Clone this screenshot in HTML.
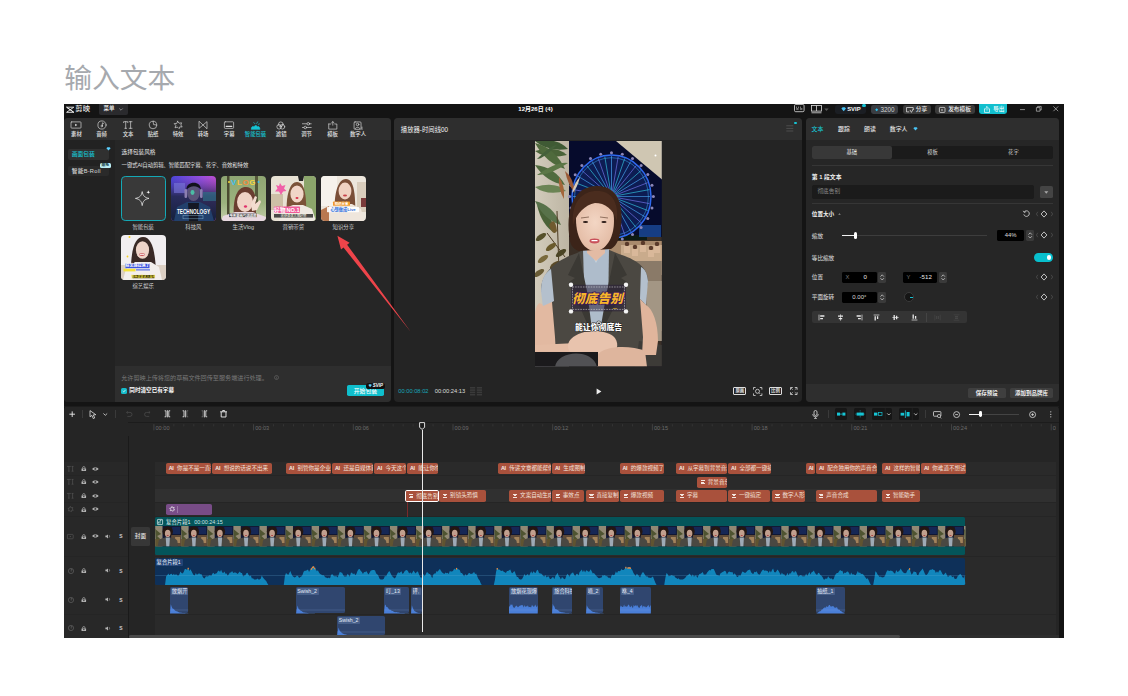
<!DOCTYPE html>
<html lang="zh-CN"><head><meta charset="utf-8"><title>输入文本</title>
<style>
html,body{margin:0;padding:0;background:#fff;}
body{width:1128px;height:696px;position:relative;overflow:hidden;font-family:"Liberation Sans","Noto Sans CJK SC",sans-serif;}
body div,body svg{position:absolute;box-sizing:border-box;}
svg{overflow:visible;}
.r2{border-radius:2px}
</style></head><body>
<div style="left:64.2px;top:58.6px;height:40px;line-height:40px;font-size:27.8px;font-weight:400;color:#a6a9ae;white-space:nowrap;font-family:'Liberation Sans','Noto Sans CJK SC',sans-serif;">输入文本</div>
<div style="left:64px;top:104px;width:1000px;height:534px;background:#141414;"></div>
<svg style="left:66px;top:105.5px;" width="8.5" height="7.5" viewBox="0 0 8.5 7.5"><path d="M0.6 1.2 L7.8 1.2 L0.6 6.3 L7.8 6.3 Z M0.6 1.2 L7.8 6.3" fill="none" stroke="#f0f0f0" stroke-width="0.9" stroke-linejoin="round"/></svg>
<div style="top:104.3px;height:10px;line-height:10px;font-size:7.3px;color:#e6e6e6;white-space:nowrap;left:75.3px;font-weight:500;letter-spacing:0.1px;">剪映</div>
<div style="left:98.5px;top:104px;width:29.5px;height:10.5px;background:#2a2a2d;border-radius:0 0 2px 2px;"></div>
<div style="top:104.3px;height:9.5px;line-height:9.5px;font-size:5.5px;color:#f0f0f0;white-space:nowrap;left:103.5px;font-weight:500;">菜单</div>
<svg style="left:118.5px;top:108px;" width="4" height="3" viewBox="0 0 4 3"><path d="M0.3 0.5 L2 2.2 L3.7 0.5" fill="none" stroke="#aaa" stroke-width="0.7"/></svg>
<div style="top:104px;height:10.5px;line-height:10.5px;font-size:6px;color:#fff;white-space:nowrap;left:435.5px;width:200px;text-align:center;font-weight:700;">12月26日 (4)</div>
<div style="left:64px;top:118px;width:327px;height:284px;background:#262626;border-radius:4px;overflow:hidden;"><div style="left:0;top:0;width:327px;height:22px;background:#2e2e2e"></div><div style="left:0;top:22px;width:50.5px;height:262px;background:#222"></div><div style="left:50.5px;top:248px;width:277px;height:36px;background:#2e2e2e"></div></div>
<div style="left:394px;top:118px;width:408px;height:284px;background:#242424;border-radius:4px;overflow:hidden;"><div style="left:0;top:0;width:408px;height:21.5px;background:#2e2e2e"></div></div>
<div style="left:806px;top:118px;width:253px;height:284px;background:#262626;border-radius:4px;overflow:hidden;"><div style="left:0;top:0;width:253px;height:21.5px;background:#2e2e2e"></div><div style="left:0;top:266px;width:253px;height:18px;background:#2e2e2e"></div></div>
<div style="left:64px;top:406px;width:995px;height:232px;background:#252525;border-radius:4px 4px 0 0;overflow:hidden;"></div>
<svg style="left:71.4px;top:121.4px;" width="10" height="8" viewBox="0 0 10 8"><g fill="none" stroke="#dedede" stroke-width="0.65" stroke-linecap="round" stroke-linejoin="round"><rect x="0" y="0.9" width="10" height="6.2" rx="0.7"/><path d="M4.2 2.8 L6.3 4 L4.2 5.2 Z" fill="#e6e6e6" stroke="none"/></g></svg>
<div style="top:131.2px;height:7px;line-height:7px;font-size:5.35px;color:#e2e2e2;white-space:nowrap;left:-23.6px;width:200px;text-align:center;font-weight:500;">素材</div>
<svg style="left:96.5px;top:121.4px;" width="10" height="8" viewBox="0 0 10 8"><g fill="none" stroke="#dedede" stroke-width="0.65" stroke-linecap="round" stroke-linejoin="round"><circle cx="5" cy="4" r="4.1"/><path d="M5.4 4.8 L5.4 1.8 L6.8 2.5"/><circle cx="4.7" cy="5" r="0.8"/></g></svg>
<div style="top:131.2px;height:7px;line-height:7px;font-size:5.35px;color:#e2e2e2;white-space:nowrap;left:1.5px;width:200px;text-align:center;font-weight:500;">音频</div>
<svg style="left:123px;top:121.4px;" width="10" height="8" viewBox="0 0 10 8"><g fill="none" stroke="#dedede" stroke-width="0.65" stroke-linecap="round" stroke-linejoin="round"><path d="M0.6 1.6 L0.6 0.7 L4.8 0.7 L4.8 1.6 M2.7 0.7 L2.7 7.3 M1.8 7.3 L3.6 7.3 M6.2 0.7 L9 0.7 M7.6 0.7 L7.6 7.3 M6.2 7.3 L9 7.3"/></g></svg>
<div style="top:131.2px;height:7px;line-height:7px;font-size:5.35px;color:#e2e2e2;white-space:nowrap;left:28px;width:200px;text-align:center;font-weight:500;">文本</div>
<svg style="left:148px;top:121.4px;" width="10" height="8" viewBox="0 0 10 8"><g fill="none" stroke="#dedede" stroke-width="0.65" stroke-linecap="round" stroke-linejoin="round"><path d="M5 0.2 A3.8 3.8 0 1 0 8.8 4 L5.6 3.6 L5 0.2 A3.8 3.8 0 0 1 8.8 4"/></g></svg>
<div style="top:131.2px;height:7px;line-height:7px;font-size:5.35px;color:#e2e2e2;white-space:nowrap;left:53px;width:200px;text-align:center;font-weight:500;">贴纸</div>
<svg style="left:173px;top:121.4px;" width="10" height="8" viewBox="0 0 10 8"><g fill="none" stroke="#dedede" stroke-width="0.65" stroke-linecap="round" stroke-linejoin="round"><path d="M4.6 0.2 L6 2.2 L8.6 1.8 L7.8 4 L9.2 6 L6.8 5.8 L6.2 7.6 M4.6 0.2 L3.8 2.4 L1.2 2.6 L2.8 4.4 L2 6.8 L4.4 6 L5.2 7"/></g></svg>
<div style="top:131.2px;height:7px;line-height:7px;font-size:5.35px;color:#e2e2e2;white-space:nowrap;left:78px;width:200px;text-align:center;font-weight:500;">特效</div>
<svg style="left:198px;top:121.4px;" width="10" height="8" viewBox="0 0 10 8"><g fill="none" stroke="#dedede" stroke-width="0.65" stroke-linecap="round" stroke-linejoin="round"><path d="M1 0.6 L1 7.4 L9 0.6 L9 7.4 Z"/></g></svg>
<div style="top:131.2px;height:7px;line-height:7px;font-size:5.35px;color:#e2e2e2;white-space:nowrap;left:103px;width:200px;text-align:center;font-weight:500;">转场</div>
<svg style="left:224.2px;top:121.4px;" width="10" height="8" viewBox="0 0 10 8"><g fill="none" stroke="#dedede" stroke-width="0.65" stroke-linecap="round" stroke-linejoin="round"><rect x="0.4" y="0.8" width="9.2" height="6.6" rx="0.8"/><path d="M2.2 5.4 L7.8 5.4" stroke-width="1.1"/></g></svg>
<div style="top:131.2px;height:7px;line-height:7px;font-size:5.35px;color:#e2e2e2;white-space:nowrap;left:129.2px;width:200px;text-align:center;font-weight:500;">字幕</div>
<svg style="left:249.9px;top:120.82px;" width="11.2" height="8.96" viewBox="0 0 10 8"><g fill="none" stroke="#16c4d4" stroke-width="0.62" stroke-linecap="round" stroke-linejoin="round"><path d="M1.2 7.2 C1.2 4.6 3 4.4 3.6 5.4 C4.4 3.4 6.4 3.8 6.4 5.4 C7.4 4.2 8.8 5 8.8 7.2 Z" fill="#16c4d4"/><path d="M3.4 1.4 L4.4 2.4 M6.8 0.8 L6 2.2 M8.4 2.6 L7.4 3" /></g></svg>
<div style="top:131.2px;height:7px;line-height:7px;font-size:5.35px;color:#16c4d4;white-space:nowrap;left:155.5px;width:200px;text-align:center;font-weight:500;">智能包装</div>
<svg style="left:275.4px;top:120.76px;" width="11.6" height="9.28" viewBox="0 0 10 8"><g fill="none" stroke="#dedede" stroke-width="0.56" stroke-linecap="round" stroke-linejoin="round"><circle cx="5" cy="2.8" r="2"/><circle cx="3.6" cy="5" r="2"/><circle cx="6.4" cy="5" r="2"/></g></svg>
<div style="top:131.2px;height:7px;line-height:7px;font-size:5.35px;color:#e2e2e2;white-space:nowrap;left:181.2px;width:200px;text-align:center;font-weight:500;">滤镜</div>
<svg style="left:300.7px;top:120.76px;" width="11.6" height="9.28" viewBox="0 0 10 8"><g fill="none" stroke="#dedede" stroke-width="0.56" stroke-linecap="round" stroke-linejoin="round"><path d="M1.2 2.4 L8.8 2.4 M1.2 5.6 L8.8 5.6"/><circle cx="6.3" cy="2.4" r="1.1" fill="#2e2e2e"/><circle cx="3.7" cy="5.6" r="1.1" fill="#2e2e2e"/></g></svg>
<div style="top:131.2px;height:7px;line-height:7px;font-size:5.35px;color:#e2e2e2;white-space:nowrap;left:206.5px;width:200px;text-align:center;font-weight:500;">调节</div>
<svg style="left:326.7px;top:120.76px;" width="11.6" height="9.28" viewBox="0 0 10 8"><g fill="none" stroke="#dedede" stroke-width="0.56" stroke-linecap="round" stroke-linejoin="round"><path d="M1.5 2.6 L1.5 7 L8.5 7 L8.5 2.6 L6.8 2.6 M1.5 2.6 L3.2 2.6 M5 0.6 L5 3.6 M3.9 1.6 L5 0.6 L6.1 1.6"/></g></svg>
<div style="top:131.2px;height:7px;line-height:7px;font-size:5.35px;color:#e2e2e2;white-space:nowrap;left:232.5px;width:200px;text-align:center;font-weight:500;">模板</div>
<svg style="left:352.2px;top:120.76px;" width="11.6" height="9.28" viewBox="0 0 10 8"><g fill="none" stroke="#dedede" stroke-width="0.56" stroke-linecap="round" stroke-linejoin="round"><rect x="1.8" y="0.8" width="6" height="6.4" rx="0.8"/><circle cx="4.8" cy="3" r="1.1"/><path d="M2.8 6.6 C3.2 5 6.4 5 6.8 6.6 M8.6 5.2 L8.6 7.4"/></g></svg>
<div style="top:131.2px;height:7px;line-height:7px;font-size:5.35px;color:#e2e2e2;white-space:nowrap;left:258px;width:200px;text-align:center;font-weight:500;">数字人</div>
<div style="left:68px;top:148.6px;width:41.3px;height:11.4px;background:#303030;border-radius:2px;"></div>
<div style="top:148.6px;height:11.4px;line-height:11.4px;font-size:5.75px;color:#16c4d4;white-space:nowrap;left:71.8px;font-weight:500;">画面包装</div>
<svg style="left:105.5px;top:146.5px;" width="5" height="4" viewBox="0 0 5 4"><path d="M0.4 1.2 L1.4 0.2 L3.6 0.2 L4.6 1.2 L2.5 3.6 Z" fill="#5bd0ff"/></svg>
<div style="left:68px;top:165.5px;width:41.3px;height:10.9px;background:#2a2a2a;border-radius:2px;"></div>
<div style="top:165.8px;height:11.4px;line-height:11.4px;font-size:5.7px;color:#dcdcdc;white-space:nowrap;left:71.8px;font-weight:500;letter-spacing:0.25px;">智能B-Roll</div>
<div style="left:99.6px;top:163.4px;width:11.2px;height:4.8px;background:#bdeef4;border-radius:1.5px;"></div>
<div style="top:163.2px;height:5.2px;line-height:5.2px;font-size:3.8px;color:#0a3038;white-space:nowrap;left:5.2px;width:200px;text-align:center;font-weight:700;">限免</div>
<div style="top:149px;height:7px;line-height:7px;font-size:5.65px;color:#eaeaea;white-space:nowrap;left:121.6px;">选择包装风格</div>
<div style="top:162.1px;height:7px;line-height:7px;font-size:5.4px;color:#e4e4e4;white-space:nowrap;left:121.6px;letter-spacing:-0.1px;">一键式AI自动剪辑、智能匹配字幕、花字、音效和特效</div>
<div style="left:120.7px;top:176.1px;width:45.1px;height:45.1px;background:#393939;border-radius:4.2px;border:0.9px solid #14a9b6;"></div>
<svg style="left:135px;top:190.4px;" width="16" height="17" viewBox="0 0 16 17"><path d="M7.2 1.6 C7.8 5.6 9.6 7.6 14 8.4 C9.6 9.2 7.8 11.2 7.2 15.6 C6.6 11.2 4.8 9.2 0.4 8.4 C4.8 7.6 6.6 5.6 7.2 1.6 Z" fill="none" stroke="#eee" stroke-width="0.75" stroke-linejoin="round"/><path d="M13.3 0.2 C13.5 1.6 13.9 2 15.3 2.2 C13.9 2.4 13.5 2.8 13.3 4.2 C13.1 2.8 12.7 2.4 11.3 2.2 C12.7 2 13.1 1.6 13.3 0.2 Z" fill="#fff"/></svg>
<svg style="left:170.9px;top:176.2px;" width="45" height="45" viewBox="0 0 45 45"><defs><clipPath id="c2"><rect x="0" y="0" width="45" height="45" rx="4"/></clipPath></defs><g clip-path="url(#c2)"><defs><linearGradient id="g2" x1="0" y1="0" x2="1" y2="0.5"><stop offset="0" stop-color="#4a45d8"/><stop offset="0.55" stop-color="#9a4fe0"/><stop offset="1" stop-color="#e050c8"/></linearGradient>
<linearGradient id="g2b" x1="0" y1="0" x2="0" y2="1"><stop offset="0" stop-color="#3b3aa0" stop-opacity="0"/><stop offset="0.45" stop-color="#20284e" stop-opacity="0.9"/><stop offset="1" stop-color="#14203c"/></linearGradient></defs>
<rect width="45" height="45" fill="url(#g2)"/><rect width="45" height="45" fill="url(#g2b)"/>
<rect x="3" y="7" width="11" height="10" fill="#7a78d8" opacity="0.6"/><rect x="32" y="16" width="13" height="9" fill="#2f6e86" opacity="0.7"/>
<path d="M3 45 L6 31 L16 26 L29 26 L39 31 L43 45 Z" fill="#22406c"/><path d="M17 27 L28 27 L27 45 L18 45 Z" fill="#141824"/>
<ellipse cx="22.5" cy="17" rx="6.2" ry="8" fill="#5a5478"/><path d="M15.5 14 C14.5 5 30.5 4 29.8 14 C27 9 19 9 15.5 14 Z" fill="#12121c"/>
<ellipse cx="21.5" cy="16.5" rx="2" ry="2.4" fill="#49d6b0" opacity="0.8"/>
<rect x="13.5" y="13" width="2.6" height="9" rx="1.2" fill="#8c7fb0"/><rect x="29" y="13" width="2.6" height="9" rx="1.2" fill="#8c7fb0"/>
<text x="22.5" y="38.3" font-family="Liberation Sans, sans-serif" font-weight="700" font-size="6.6" fill="#fff" text-anchor="middle" textLength="33" lengthAdjust="spacingAndGlyphs">TECHNOLOGY</text>
<rect x="12" y="39.4" width="20" height="3.4" fill="none" stroke="#9fd8ee" stroke-width="0.5" opacity="0.7"/></g></svg>
<svg style="left:220.8px;top:176.2px;" width="45" height="45" viewBox="0 0 45 45"><defs><clipPath id="c3"><rect x="0" y="0" width="45" height="45" rx="4"/></clipPath></defs><g clip-path="url(#c3)"><defs><linearGradient id="g3" x1="0" y1="0" x2="0" y2="1"><stop offset="0" stop-color="#8ea572"/><stop offset="0.6" stop-color="#9cb27e"/><stop offset="1" stop-color="#c4ceaa"/></linearGradient></defs>
<rect width="45" height="45" fill="url(#g3)"/><rect x="6" y="0" width="2.5" height="45" fill="#4a4a30"/><rect x="34" y="0" width="3" height="30" fill="#55583a"/>
<path d="M13 45 C11 20 17 11 25 11 C34 11 37 22 34 45 Z" fill="#6a3d30"/>
<ellipse cx="24" cy="26" rx="8" ry="10" fill="#f0d3c6"/><ellipse cx="24.5" cy="30.5" rx="1.6" ry="1.3" fill="#e0306a"/>
<path d="M30 28 L34 20 L36 21 L34 28 L39 24 L40 26 L36 34 L31 35 Z" fill="#f3dccf"/>
<path d="M0 45 L2 40 L14 36 L32 36 L45 41 L45 45 Z" fill="#e8d8e0"/>
<text x="22.5" y="8.6" font-family="Liberation Sans, sans-serif" font-weight="700" font-size="8" text-anchor="middle" letter-spacing="0.6"><tspan fill="#3ec0f0">V</tspan><tspan fill="#f9c13c">L</tspan><tspan fill="#f58a3c">O</tspan><tspan fill="#f5d63c">G</tspan></text>
<circle cx="8" cy="6" r="1" fill="#f5d63c"/><circle cx="37.5" cy="6" r="1" fill="#3ec0f0"/>
<rect x="8" y="37.5" width="28" height="3.6" fill="#222" opacity="0.75"/><text x="22" y="40.6" font-size="3.4" fill="#fff" text-anchor="middle" font-weight="700">今天是元气满满的</text></g></svg>
<svg style="left:270.8px;top:176.2px;" width="45" height="45" viewBox="0 0 45 45"><defs><clipPath id="c4"><rect x="0" y="0" width="45" height="45" rx="4"/></clipPath></defs><g clip-path="url(#c4)"><rect width="45" height="45" fill="#e8e2d4"/><rect x="33" y="0" width="12" height="45" fill="#7a9a58" opacity="0.85"/><rect x="0" y="18" width="12" height="16" fill="#cdbfa6"/>
<path d="M27 0 L33 0 L32 5 L28 5 Z" fill="#222"/>
<path d="M16 45 C14 18 19 6 26 6 C34 6 36 20 35 45 Z" fill="#7a5238"/>
<ellipse cx="26" cy="18" rx="6.6" ry="8.6" fill="#f1d6c8"/><ellipse cx="26" cy="22" rx="1.5" ry="1.1" fill="#d8304a"/>
<path d="M8 45 L12 33 L22 29 L32 29 L41 33 L45 45 Z" fill="#efe9e2"/>
<path d="M9 7 L11 10 L14.5 9 L13 12.5 L15.5 15 L12 15.5 L10 19 L8 15.5 L4 15.5 L6.5 12.5 L5 9 L8 10 Z" fill="#f060a8"/>
<rect x="3" y="30.5" width="26" height="6.4" fill="#f05a9a" rx="0.8"/><text x="16" y="35.8" font-size="5.6" font-weight="700" fill="#fff" text-anchor="middle" font-family="Liberation Sans, sans-serif">好物NO.1</text>
<rect x="3" y="38" width="39" height="3.6" fill="#222" opacity="0.8"/><text x="22.5" y="41" font-size="3.2" fill="#ffe" text-anchor="middle">收获满满大牌好物</text></g></svg>
<svg style="left:320.8px;top:176.2px;" width="45" height="45" viewBox="0 0 45 45"><defs><clipPath id="c5"><rect x="0" y="0" width="45" height="45" rx="4"/></clipPath></defs><g clip-path="url(#c5)"><rect width="45" height="45" fill="#ece6dc"/><rect x="0" y="0" width="16" height="30" fill="#f6f2ec"/><rect x="36" y="6" width="9" height="30" fill="#d9cdbc"/><rect x="40" y="22" width="5" height="9" fill="#7a3a3a"/>
<path d="M14 45 C12 20 16 3 25 3 C33 3 35 18 34 45 Z" fill="#7a4f38"/>
<ellipse cx="24" cy="15" rx="6.4" ry="8.4" fill="#f0d2c2"/><ellipse cx="24" cy="19.6" rx="2" ry="1" fill="#c8424a"/>
<path d="M2 45 L5 34 L16 28 L31 28 L40 33 L43 45 Z" fill="#efe6dc"/><path d="M0 34 L8 30 L8 45 L0 45 Z" fill="#b87850"/>
<rect x="12" y="25.6" width="17" height="4.2" fill="#f29a2a" rx="0.6"/><text x="20.5" y="29" font-size="3.4" fill="#fff" font-weight="700" text-anchor="middle">知识分享</text>
<rect x="6" y="31" width="32" height="5.2" fill="#fff" opacity="0.9" rx="0.6"/><text x="22" y="35.2" font-size="4.2" fill="#2a6ad8" font-weight="700" text-anchor="middle">心想做成Live</text></g></svg>
<svg style="left:120.8px;top:235.1px;" width="45" height="45" viewBox="0 0 45 45"><defs><clipPath id="c6"><rect x="0" y="0" width="45" height="45" rx="4"/></clipPath></defs><g clip-path="url(#c6)"><rect width="45" height="45" fill="#f1eef0"/><rect x="0" y="30" width="45" height="15" fill="#dcd0c4"/>
<path d="M10 45 C9 14 14 2 22 2 C31 2 34 16 35 36 L28 45 Z" fill="#3a2a26"/>
<ellipse cx="21.5" cy="15" rx="6.6" ry="8.8" fill="#efd4c8"/><ellipse cx="21" cy="19.6" rx="3" ry="1.3" fill="#c84a50"/><rect x="18.6" y="18.9" width="4.8" height="0.9" fill="#fff"/>
<path d="M2 45 L5 34 L14 27 L30 27 L38 32 L41 45 Z" fill="#f3efec"/>
<circle cx="8.5" cy="2" r="1" fill="#f5d020"/><circle cx="6.5" cy="21.5" r="0.9" fill="#f5d020"/>
<rect x="4.5" y="28.6" width="24" height="4.6" fill="#3d55e0"/><text x="16.5" y="32.4" font-size="4" fill="#fff" font-weight="700" text-anchor="middle">综艺感拉满了</text>
<rect x="2.5" y="33.8" width="12" height="2.6" fill="#f3e23a"/><rect x="15" y="34.4" width="14" height="1" fill="#3d55e0"/>
<rect x="11.5" y="40" width="22" height="3.2" fill="#1c1c10"/><text x="22.5" y="42.7" font-size="3" fill="#f3e23a" font-weight="700" text-anchor="middle">快乐就是这么简单</text></g></svg>
<div style="top:224px;height:7.2px;line-height:7.2px;font-size:5.4px;color:#cfcfcf;white-space:nowrap;left:43.2px;width:200px;text-align:center;">智能包装</div>
<div style="top:224px;height:7.2px;line-height:7.2px;font-size:5.4px;color:#cfcfcf;white-space:nowrap;left:93.4px;width:200px;text-align:center;">科技风</div>
<div style="top:224px;height:7.2px;line-height:7.2px;font-size:5.4px;color:#cfcfcf;white-space:nowrap;left:143.3px;width:200px;text-align:center;">生活Vlog</div>
<div style="top:224px;height:7.2px;line-height:7.2px;font-size:5.4px;color:#cfcfcf;white-space:nowrap;left:193.3px;width:200px;text-align:center;">营销带货</div>
<div style="top:224px;height:7.2px;line-height:7.2px;font-size:5.4px;color:#cfcfcf;white-space:nowrap;left:243.3px;width:200px;text-align:center;">知识分享</div>
<div style="top:282.6px;height:7.2px;line-height:7.2px;font-size:5.4px;color:#cfcfcf;white-space:nowrap;left:43.2px;width:200px;text-align:center;">综艺娱乐</div>
<svg style="left:330px;top:230px;" width="90" height="110" viewBox="0 0 90 110"><path d="M80.9 101.9 L17.1 14.7 L19.6 12.8 L7.4 5.8 L11 19.4 L13.5 17.5 Z" fill="#ee444a"/></svg>
<div style="top:374.4px;height:7.4px;line-height:7.4px;font-size:6.12px;color:#787878;white-space:nowrap;left:121.2px;">允许剪映上传将您的草稿文件回传至服务端进行处理。</div>
<svg style="left:273.8px;top:375.4px;" width="5" height="5" viewBox="0 0 5 5"><circle cx="2.5" cy="2.5" r="2" fill="none" stroke="#7c7c7c" stroke-width="0.45"/><path d="M2.5 2.3 L2.5 3.6 M2.5 1.3 L2.5 1.6" stroke="#7c7c7c" stroke-width="0.5"/></svg>
<div style="left:121.2px;top:387.5px;width:6.3px;height:6.3px;background:#15bccb;border-radius:1.6px;"></div>
<svg style="left:122.3px;top:388.7px;" width="4.2" height="4" viewBox="0 0 4.2 4"><path d="M0.7 2 L1.7 3 L3.5 0.9" fill="none" stroke="#fff" stroke-width="0.7"/></svg>
<div style="top:387px;height:7.2px;line-height:7.2px;font-size:5.6px;color:#fff;white-space:nowrap;left:129.3px;font-weight:700;">同时清空已有字幕</div>
<div style="left:346.9px;top:384.9px;width:37.3px;height:11.1px;background:#0fbfcd;border-radius:1.8px;"></div>
<div style="top:385.6px;height:11.2px;line-height:11.2px;font-size:5.8px;color:#fff;white-space:nowrap;left:265.4px;width:200px;text-align:center;font-weight:500;">开始包装</div>
<div style="left:366.4px;top:383.4px;width:18.8px;height:5.2px;background:#111;border-radius:2.6px;"></div>
<svg style="left:368.2px;top:384.3px;" width="4.2" height="3.5" viewBox="0 0 3.6 3"><path d="M0.3 0.9 L1 0.2 L2.6 0.2 L3.3 0.9 L1.8 2.7 Z" fill="#5bd0ff"/></svg>
<div style="top:383.2px;height:5.6px;line-height:5.6px;font-size:4.5px;color:#fff;white-space:nowrap;left:372.7px;font-weight:700;font-style:italic;">SVIP</div>
<div style="top:125px;height:9px;line-height:9px;font-size:6.35px;color:#f2f2f2;white-space:nowrap;left:400.8px;font-weight:400;">播放器-时间线00</div>
<svg style="left:786px;top:125.2px;" width="8" height="7" viewBox="0 0 8 7"><path d="M0.3 0.8 L7.3 0.8 M0.3 3.4 L7.3 3.4 M0.3 6 L7.3 6" stroke="#5a5a5a" stroke-width="0.7"/></svg>
<div style="left:794.2px;top:121.8px;width:2.6px;height:2.6px;background:#16c4d4;border-radius:50%;"></div>
<svg style="left:534.6px;top:140.7px;" width="126.8" height="225.2" viewBox="0 0 126.8 225.2"><defs><clipPath id="vc"><rect width="126.8" height="225.2"/></clipPath><radialGradient id="sk" cx="0.5" cy="0.45" r="0.6"><stop offset="0" stop-color="#f3d6c4"/><stop offset="1" stop-color="#e2b9a2"/></radialGradient><linearGradient id="wall" x1="0" y1="0" x2="1" y2="0"><stop offset="0" stop-color="#d2cbbb"/><stop offset="1" stop-color="#bdb5a3"/></linearGradient></defs><g clip-path="url(#vc)"><rect width="127" height="226" fill="#060b2c"/><rect x="34" y="96" width="93" height="130" fill="#3a2f26"/><rect x="60" y="100" width="67" height="22" fill="#a98a6c"/><rect x="86" y="104" width="41" height="30" fill="#c9ab8c"/><rect x="100" y="120" width="27" height="70" fill="#8a7a68"/><rect x="112" y="140" width="15" height="60" fill="#a39684"/><circle cx="92" cy="103" r="2.2" fill="#5a3a2a"/><rect x="89" y="105" width="6" height="7" fill="#d9b89a"/><circle cx="100" cy="106" r="2.2" fill="#5a3a2a"/><rect x="97" y="108" width="6" height="7" fill="#d9b89a"/><circle cx="108" cy="102" r="2.2" fill="#5a3a2a"/><rect x="105" y="104" width="6" height="7" fill="#d9b89a"/><circle cx="116" cy="107" r="2.2" fill="#5a3a2a"/><rect x="113" y="109" width="6" height="7" fill="#d9b89a"/><circle cx="122" cy="103" r="2.2" fill="#5a3a2a"/><rect x="119" y="105" width="6" height="7" fill="#d9b89a"/><rect x="62" y="94" width="50" height="5" fill="#0c1a14"/><rect x="104" y="84" width="22" height="12" fill="#1a4a9a" opacity="0.8"/><rect x="0" y="0" width="34" height="226" fill="url(#wall)"/><path d="M81 0 L127 0 L127 38.5 Z" fill="#cfc6b2"/><circle cx="120.5" cy="14.5" r="1" fill="#fff"/><ellipse cx="76.5" cy="55.6" rx="39.5" ry="41.5" fill="#2a5ae0" fill-opacity="0.22" stroke="#2f6af0" stroke-width="1.5"/><ellipse cx="76.5" cy="55.6" rx="36.9" ry="38.9" fill="none" stroke="#3aa8f5" stroke-width="0.5"/><line x1="76.5" y1="55.6" x2="115.0" y2="55.6" stroke="#4fb2ff" stroke-width="0.7" opacity="0.9"/><line x1="76.5" y1="55.6" x2="114.4" y2="62.6" stroke="#7c7cf5" stroke-width="0.7" opacity="0.9"/><line x1="76.5" y1="55.6" x2="112.7" y2="69.5" stroke="#38d0e8" stroke-width="0.7" opacity="0.9"/><line x1="76.5" y1="55.6" x2="109.8" y2="75.8" stroke="#4fb2ff" stroke-width="0.7" opacity="0.9"/><line x1="76.5" y1="55.6" x2="106.0" y2="81.6" stroke="#7c7cf5" stroke-width="0.7" opacity="0.9"/><line x1="76.5" y1="55.6" x2="101.2" y2="86.6" stroke="#38d0e8" stroke-width="0.7" opacity="0.9"/><line x1="76.5" y1="55.6" x2="95.8" y2="90.7" stroke="#4fb2ff" stroke-width="0.7" opacity="0.9"/><line x1="76.5" y1="55.6" x2="89.7" y2="93.7" stroke="#7c7cf5" stroke-width="0.7" opacity="0.9"/><line x1="76.5" y1="55.6" x2="83.2" y2="95.5" stroke="#38d0e8" stroke-width="0.7" opacity="0.9"/><line x1="76.5" y1="55.6" x2="76.5" y2="96.1" stroke="#4fb2ff" stroke-width="0.7" opacity="0.9"/><line x1="76.5" y1="55.6" x2="69.8" y2="95.5" stroke="#7c7cf5" stroke-width="0.7" opacity="0.9"/><line x1="76.5" y1="55.6" x2="63.3" y2="93.7" stroke="#38d0e8" stroke-width="0.7" opacity="0.9"/><line x1="76.5" y1="55.6" x2="57.3" y2="90.7" stroke="#4fb2ff" stroke-width="0.7" opacity="0.9"/><line x1="76.5" y1="55.6" x2="51.8" y2="86.6" stroke="#7c7cf5" stroke-width="0.7" opacity="0.9"/><line x1="76.5" y1="55.6" x2="47.0" y2="81.6" stroke="#38d0e8" stroke-width="0.7" opacity="0.9"/><line x1="76.5" y1="55.6" x2="43.2" y2="75.9" stroke="#4fb2ff" stroke-width="0.7" opacity="0.9"/><line x1="76.5" y1="55.6" x2="40.3" y2="69.5" stroke="#7c7cf5" stroke-width="0.7" opacity="0.9"/><line x1="76.5" y1="55.6" x2="38.6" y2="62.6" stroke="#38d0e8" stroke-width="0.7" opacity="0.9"/><line x1="76.5" y1="55.6" x2="38.0" y2="55.6" stroke="#4fb2ff" stroke-width="0.7" opacity="0.9"/><line x1="76.5" y1="55.6" x2="38.6" y2="48.6" stroke="#7c7cf5" stroke-width="0.7" opacity="0.9"/><line x1="76.5" y1="55.6" x2="40.3" y2="41.7" stroke="#38d0e8" stroke-width="0.7" opacity="0.9"/><line x1="76.5" y1="55.6" x2="43.2" y2="35.3" stroke="#4fb2ff" stroke-width="0.7" opacity="0.9"/><line x1="76.5" y1="55.6" x2="47.0" y2="29.6" stroke="#7c7cf5" stroke-width="0.7" opacity="0.9"/><line x1="76.5" y1="55.6" x2="51.8" y2="24.6" stroke="#38d0e8" stroke-width="0.7" opacity="0.9"/><line x1="76.5" y1="55.6" x2="57.2" y2="20.5" stroke="#4fb2ff" stroke-width="0.7" opacity="0.9"/><line x1="76.5" y1="55.6" x2="63.3" y2="17.5" stroke="#7c7cf5" stroke-width="0.7" opacity="0.9"/><line x1="76.5" y1="55.6" x2="69.8" y2="15.7" stroke="#38d0e8" stroke-width="0.7" opacity="0.9"/><line x1="76.5" y1="55.6" x2="76.5" y2="15.1" stroke="#4fb2ff" stroke-width="0.7" opacity="0.9"/><line x1="76.5" y1="55.6" x2="83.2" y2="15.7" stroke="#7c7cf5" stroke-width="0.7" opacity="0.9"/><line x1="76.5" y1="55.6" x2="89.7" y2="17.5" stroke="#38d0e8" stroke-width="0.7" opacity="0.9"/><line x1="76.5" y1="55.6" x2="95.7" y2="20.5" stroke="#4fb2ff" stroke-width="0.7" opacity="0.9"/><line x1="76.5" y1="55.6" x2="101.2" y2="24.6" stroke="#7c7cf5" stroke-width="0.7" opacity="0.9"/><line x1="76.5" y1="55.6" x2="106.0" y2="29.6" stroke="#38d0e8" stroke-width="0.7" opacity="0.9"/><line x1="76.5" y1="55.6" x2="109.8" y2="35.4" stroke="#4fb2ff" stroke-width="0.7" opacity="0.9"/><line x1="76.5" y1="55.6" x2="112.7" y2="41.7" stroke="#7c7cf5" stroke-width="0.7" opacity="0.9"/><line x1="76.5" y1="55.6" x2="114.4" y2="48.6" stroke="#38d0e8" stroke-width="0.7" opacity="0.9"/><circle cx="118.4" cy="55.6" r="1.5" fill="#8b86b8"/><circle cx="117.0" cy="67.0" r="1.5" fill="#8b86b8"/><circle cx="112.8" cy="77.5" r="1.5" fill="#8b86b8"/><circle cx="106.1" cy="86.6" r="1.5" fill="#8b86b8"/><circle cx="97.5" cy="93.6" r="1.5" fill="#8b86b8"/><circle cx="87.3" cy="98.0" r="1.5" fill="#8b86b8"/><circle cx="76.5" cy="99.5" r="1.5" fill="#8b86b8"/><circle cx="65.7" cy="98.0" r="1.5" fill="#8b86b8"/><circle cx="55.6" cy="93.6" r="1.5" fill="#8b86b8"/><circle cx="46.9" cy="86.6" r="1.5" fill="#8b86b8"/><circle cx="40.2" cy="77.5" r="1.5" fill="#8b86b8"/><circle cx="36.0" cy="67.0" r="1.5" fill="#8b86b8"/><circle cx="34.6" cy="55.6" r="1.5" fill="#8b86b8"/><circle cx="36.0" cy="44.2" r="1.5" fill="#8b86b8"/><circle cx="40.2" cy="33.7" r="1.5" fill="#8b86b8"/><circle cx="46.9" cy="24.6" r="1.5" fill="#8b86b8"/><circle cx="55.5" cy="17.6" r="1.5" fill="#8b86b8"/><circle cx="65.7" cy="13.2" r="1.5" fill="#8b86b8"/><circle cx="76.5" cy="11.7" r="1.5" fill="#8b86b8"/><circle cx="87.3" cy="13.2" r="1.5" fill="#8b86b8"/><circle cx="97.5" cy="17.6" r="1.5" fill="#8b86b8"/><circle cx="106.1" cy="24.6" r="1.5" fill="#8b86b8"/><circle cx="112.8" cy="33.6" r="1.5" fill="#8b86b8"/><circle cx="117.0" cy="44.2" r="1.5" fill="#8b86b8"/><path d="M74.5 55.6 L71.5 100 L81.5 100 L78.5 55.6 Z" fill="#2a3f8a"/><path d="M0 0 Q21.5 -4.0 33 8 Q12.5 11.0 0 0 Z" fill="#3f5a34"/><path d="M0 10 Q21.0 4.0 32 14 Q12.0 19.0 0 10 Z" fill="#4a6338"/><path d="M0 24 Q20.0 26.0 30 44 Q11.0 41.0 0 24 Z" fill="#506b3e"/><path d="M2 64 Q16.0 70.0 20 92 Q7.0 85.0 2 64 Z" fill="#4a6238"/><path d="M0 2 Q20.0 7.0 30 28 Q11.0 22.0 0 2 Z" fill="#4f6a3c"/><path d="M2 34 Q22.5 20.0 33 22 Q13.5 35.0 2 34 Z" fill="#5c7746"/><path d="M0 46 Q20.5 40.0 31 50 Q11.5 55.0 0 46 Z" fill="#6b8454"/><path d="M0 60 Q18.0 64.0 26 84 Q9.0 79.0 0 60 Z" fill="#58724a"/><path d="M2 18 Q17.0 3.0 22 4 Q8.0 18.0 2 18 Z" fill="#44603a"/><path d="M30 30 Q38 36 40 52 Q33 44 30 30 Z" fill="#9a5a36"/><path d="M24 36 Q30 44 29 58 Q23 48 24 36 Z" fill="#a4663a"/><path d="M45 36 Q42 48 37 52 Q39 42 45 36 Z" fill="#d8cbb8"/><path d="M14 84 Q20 74 22 90 Q18 96 14 84 Z" fill="#6f5a2e"/><path d="M22 70 L24 130 M12 92 L30 116" stroke="#4a3a22" stroke-width="1"/><ellipse cx="6" cy="96" rx="6" ry="2.6" fill="#55502a" transform="rotate(-35 6 96)"/><ellipse cx="16" cy="106" rx="6" ry="2.6" fill="#6a5a2c" transform="rotate(-35 16 106)"/><ellipse cx="26" cy="112" rx="6" ry="2.6" fill="#4a4424" transform="rotate(-35 26 112)"/><ellipse cx="8" cy="118" rx="6" ry="2.6" fill="#7a6a3c" transform="rotate(-35 8 118)"/><ellipse cx="20" cy="124" rx="6" ry="2.6" fill="#5a4a28" transform="rotate(-35 20 124)"/><ellipse cx="30" cy="128" rx="6" ry="2.6" fill="#85744a" transform="rotate(-35 30 128)"/><ellipse cx="4" cy="132" rx="6" ry="2.6" fill="#6a5c36" transform="rotate(-35 4 132)"/><path d="M16 226 L17 160 L6 150 C6 130 24 118 42 112 L50 108 L72 108 L84 113 C100 118 113 126 113 140 L109 162 L109 226 Z" fill="#4b4842"/><path d="M100 226 L104 200 L127 204 L127 226 Z" fill="#3d3b37"/><path d="M6 150 C6 138 10 132 16 128 L19 160 L8 166 Z" fill="#b4c0cd"/><path d="M113 140 C112 132 110 128 106 126 L105 158 L111 164 Z" fill="#b4c0cd"/><path d="M0 172 C2 160 6 161 8 165 L17 161 L20 196 L21 214 L0 214 Z" fill="#e2b9a1"/><path d="M0 204 L42 202 L42 214 L0 214 Z" fill="#e4bca4"/><path d="M105 158 L111 164 C118 168 123 182 123 200 L121 214 L107 214 L108 196 Z" fill="#e0b59c"/><path d="M48 108 L74 108 L73 176 L61 192 L50 176 Z" fill="#aebccb"/><path d="M54 108 L61 122 L68 108 Z" fill="#c6d2de"/><path d="M44 112 L33 134 L40 137 L34 141 L58 196 L52 150 Z" fill="#3b3934"/><path d="M80 112 L92 134 L86 137 L92 141 L64 196 L72 150 Z" fill="#3b3934"/><path d="M36 198 C46 188 68 188 78 195 C84 200 84 210 76 214 L40 214 C32 212 31 203 36 198 Z" fill="#e8c3ad"/><path d="M62 214 C70 204 96 204 110 210 L112 226 L62 226 Z" fill="#deb59d"/><rect x="0" y="211" width="63" height="15" fill="#1b1a1c"/><path d="M20 226 C22 209 58 207 62 226 Z" fill="#5a5c5e" opacity="0.85"/><path d="M52 98 L70 98 L70 112 L61 120 L52 112 Z" fill="#e3bba4"/><path d="M35 100 C30 70 38 45 62 45 C84 45 90 66 85 92 C84 100 80 106 76 108 L44 110 C38 108 36 104 35 100 Z" fill="#3c2419"/><path d="M41 78 C41 62 50 58 60 58 C72 58 79 64 79 80 C79 98 70 110 60 110 C50 110 41 98 41 78 Z" fill="url(#sk)"/><path d="M38 84 C36 60 48 50 62 50 C76 50 84 60 82 80 C78 68 70 62 60 62 C50 64 42 72 38 84 Z" fill="#4a2c1e"/><ellipse cx="50.5" cy="81" rx="2.6" ry="1.1" fill="#2a1a16"/><ellipse cx="69" cy="81" rx="2.6" ry="1.1" fill="#2a1a16"/><path d="M46 77 L54 76 M65 76 L73 77" stroke="#6a4a3a" stroke-width="0.7"/><ellipse cx="59.5" cy="100" rx="5" ry="2.4" fill="#c9505a"/><rect x="56.5" y="99" width="6" height="1.2" fill="#fff"/><rect x="36" y="143.8" width="55" height="26.6" fill="#2a1f3a" opacity="0.55"/><rect x="37.5" y="146" width="52" height="22.4" fill="none" stroke="#eee" stroke-width="0.5" stroke-dasharray="1.6 1"/><text x="62.5" y="162.4" font-family="Liberation Sans, Noto Sans CJK SC, sans-serif" font-weight="900" font-style="italic" font-size="12.6" text-anchor="middle" fill="#f7b52a" stroke="#35185a" stroke-width="1.6" paint-order="stroke" letter-spacing="0.2">彻底告别</text><text x="80" y="168.2" font-size="2.4" fill="#f7d52a" text-anchor="middle" font-family="Liberation Sans, sans-serif">▸▸▸▸</text><circle cx="36" cy="143.8" r="2.2" fill="#f4f4f4"/><circle cx="91" cy="143.8" r="2.2" fill="#f4f4f4"/><circle cx="36" cy="170.4" r="2.2" fill="#f4f4f4"/><circle cx="91" cy="170.4" r="2.2" fill="#f4f4f4"/><text x="63.6" y="189.4" font-family="Liberation Sans, Noto Sans CJK SC, sans-serif" font-weight="900" font-size="7.9" text-anchor="middle" fill="#fff" stroke="#222" stroke-width="0.9" paint-order="stroke">能让你彻底告</text><circle cx="63.8" cy="182.4" r="2.4" fill="#fff" stroke="#222" stroke-width="0.6"/><rect x="62.6" y="181.6" width="2.4" height="1.6" fill="#333"/></g></svg>
<div style="top:387px;height:8.2px;line-height:8.2px;font-size:5.75px;color:#17a8b8;white-space:nowrap;left:398.2px;">00:00:08:02</div>
<div style="top:387px;height:8.2px;line-height:8.2px;font-size:5.75px;color:#ddd;white-space:nowrap;left:434.8px;">00:00:24:13</div>
<svg style="left:470px;top:386.6px;" width="12.5" height="8.6" viewBox="0 0 12.5 8.6"><g fill="#3a3a3a"><rect x="0" y="0" width="5.2" height="1.6"/><rect x="0" y="2.3" width="5.2" height="1.6"/><rect x="0" y="4.6" width="5.2" height="1.6"/><rect x="0" y="6.9" width="5.2" height="1.6"/><rect x="6.8" y="0" width="5.2" height="1.6"/><rect x="6.8" y="2.3" width="5.2" height="1.6"/><rect x="6.8" y="4.6" width="5.2" height="1.6"/><rect x="6.8" y="6.9" width="5.2" height="1.6"/></g></svg>
<svg style="left:596px;top:387.6px;" width="6" height="7" viewBox="0 0 6 7"><path d="M0.6 0.4 L5.4 3.4 L0.6 6.4 Z" fill="#eee"/></svg>
<div style="left:733.2px;top:387px;width:13.2px;height:8.2px;border:0.8px solid #ddd;border-radius:1px;"></div>
<div style="top:387.2px;height:8px;line-height:8px;font-size:4.4px;color:#ddd;white-space:nowrap;left:639.8px;width:200px;text-align:center;font-weight:700;">原画</div>
<svg style="left:753px;top:386.6px;" width="9.4" height="9" viewBox="0 0 9.4 9"><path d="M0.5 2.6 L0.5 0.5 L2.6 0.5 M6.8 0.5 L8.9 0.5 L8.9 2.6 M8.9 6.4 L8.9 8.5 L6.8 8.5 M2.6 8.5 L0.5 8.5 L0.5 6.4" fill="none" stroke="#ddd" stroke-width="0.8"/><circle cx="4.5" cy="4.3" r="2" fill="none" stroke="#ddd" stroke-width="0.8"/><path d="M6 5.8 L7 6.8" stroke="#ddd" stroke-width="0.8"/></svg>
<div style="left:768.8px;top:387px;width:13.4px;height:8.2px;border:0.8px solid #ddd;border-radius:1px;"></div>
<div style="top:387.2px;height:8px;line-height:8px;font-size:4.4px;color:#ddd;white-space:nowrap;left:675.5px;width:200px;text-align:center;font-weight:700;">比例</div>
<svg style="left:790.4px;top:387px;" width="7.6" height="8" viewBox="0 0 7.6 8"><path d="M0.5 2.8 L0.5 0.5 L2.8 0.5 M4.8 0.5 L7.1 0.5 L7.1 2.8 M7.1 5.2 L7.1 7.5 L4.8 7.5 M2.8 7.5 L0.5 7.5 L0.5 5.2" fill="none" stroke="#ddd" stroke-width="0.8"/><path d="M1 1 L2.8 2.8 M6.6 1 L4.8 2.8 M1 7 L2.8 5.2 M6.6 7 L4.8 5.2" stroke="#ddd" stroke-width="0.6"/></svg>
<svg style="left:794.4px;top:104.4px;" width="10.6" height="8.2" viewBox="0 0 10.6 8.2"><rect x="0.5" y="0.5" width="9.6" height="7.2" rx="1.2" fill="none" stroke="#ddd" stroke-width="0.8"/><path d="M2.2 5 L4.6 5 M6 5 L8.4 5 M2.2 3.2 L3 3.2 M4.2 3.2 L5 3.2 M6.2 3.2 L7 3.2" stroke="#ddd" stroke-width="0.9"/></svg>
<svg style="left:811px;top:104.6px;" width="11.4" height="8.6" viewBox="0 0 11.4 8.6"><rect x="0.5" y="0.5" width="10" height="5.6" fill="none" stroke="#ddd" stroke-width="0.8"/><path d="M5.5 0.5 L5.5 6 M0.5 7.8 L10.5 7.8" stroke="#ddd" stroke-width="0.8"/></svg>
<svg style="left:824px;top:108px;" width="5" height="3.4" viewBox="0 0 5 3.4"><path d="M0.3 0.4 L4.7 0.4 L2.5 3 Z" fill="#555"/></svg>
<div style="left:835.3px;top:105px;width:30.3px;height:9.3px;background:#1b1e23;border-radius:2.4px;"></div>
<svg style="left:840.5px;top:107px;" width="5.4" height="4.6" viewBox="0 0 5.4 4.6"><path d="M0.4 1.5 L1.6 0.3 L3.8 0.3 L5 1.5 L2.7 4.3 Z" fill="#49c4f5"/></svg>
<div style="top:105px;height:9.3px;line-height:9.3px;font-size:5.9px;color:#f4f4f4;white-space:nowrap;left:847.2px;font-weight:700;">SVIP</div>
<div style="left:862.4px;top:103.6px;width:3.4px;height:3.4px;background:#16c4d4;border-radius:50%;"></div>
<div style="left:870.5px;top:105px;width:27.5px;height:9.3px;background:#3a3d42;border-radius:2.4px;"></div>
<svg style="left:874.6px;top:108px;" width="3.4" height="3.4" viewBox="0 0 3.4 3.4"><path d="M1.7 0.2 L3.2 1.7 L1.7 3.2 L0.2 1.7 Z" fill="#2ac4f0"/></svg>
<div style="top:105px;height:9.3px;line-height:9.3px;font-size:6.3px;color:#d4d4d4;white-space:nowrap;left:880.6px;font-weight:400;">3200</div>
<div style="left:903px;top:105px;width:28px;height:9.3px;background:#3a3a3a;border-radius:2.4px;"></div>
<svg style="left:906.4px;top:106.6px;" width="8" height="6.2" viewBox="0 0 8 6.2"><path d="M3.2 4.9 L0.5 4.9 L0.5 0.5 L7.2 0.5 L7.2 3" fill="none" stroke="#eee" stroke-width="0.7"/><path d="M4 3 L5.4 5.4 L7.4 1.8" fill="none" stroke="#eee" stroke-width="0.7"/></svg>
<div style="top:105px;height:9.3px;line-height:9.3px;font-size:5.7px;color:#ececec;white-space:nowrap;left:915.8px;font-weight:500;">分享</div>
<div style="left:935px;top:105px;width:39.8px;height:9.3px;background:#3a3a3a;border-radius:2.4px;"></div>
<svg style="left:939px;top:106.8px;" width="6.6" height="6" viewBox="0 0 6.6 6"><rect x="0.4" y="0.4" width="5.6" height="5" rx="0.8" fill="none" stroke="#eee" stroke-width="0.7"/><path d="M2.5 1.9 L4.2 2.9 L2.5 3.9 Z" fill="#eee"/></svg>
<div style="top:105px;height:9.3px;line-height:9.3px;font-size:5.7px;color:#ececec;white-space:nowrap;left:948.2px;font-weight:500;">发布模板</div>
<div style="left:979.2px;top:104px;width:28.2px;height:10.4px;background:#12bfce;border-radius:0 0 2.4px 2.4px;"></div>
<svg style="left:984.4px;top:106px;" width="6" height="7" viewBox="0 0 6 7"><path d="M1.8 2.8 L0.5 2.8 L0.5 6.4 L5.5 6.4 L5.5 2.8 L4.2 2.8 M3 4.6 L3 0.6 M1.8 1.7 L3 0.5 L4.2 1.7" fill="none" stroke="#fff" stroke-width="0.7"/></svg>
<div style="top:104px;height:10.4px;line-height:10.4px;font-size:5.6px;color:#fff;white-space:nowrap;left:993.2px;font-weight:500;">导出</div>
<svg style="left:1019.6px;top:109px;" width="5" height="1.4" viewBox="0 0 5 1.4"><path d="M0 0.6 L5 0.6" stroke="#bbb" stroke-width="0.7"/></svg>
<svg style="left:1035.6px;top:106.4px;" width="5.6" height="5.6" viewBox="0 0 5.6 5.6"><path d="M0.4 1.6 L4 1.6 L4 5.2 L0.4 5.2 Z M1.6 1.6 L1.6 0.4 L5.2 0.4 L5.2 4 L4 4" fill="none" stroke="#bbb" stroke-width="0.7"/></svg>
<svg style="left:1052.6px;top:106.4px;" width="5.6" height="5.6" viewBox="0 0 5.6 5.6"><path d="M0.4 0.4 L5.2 5.2 M5.2 0.4 L0.4 5.2" stroke="#bbb" stroke-width="0.7"/></svg>
<div style="top:125px;height:9px;line-height:9px;font-size:5.9px;color:#16c4d4;white-space:nowrap;left:811.6px;font-weight:500;">文本</div>
<div style="top:125px;height:9px;line-height:9px;font-size:5.9px;color:#e2e2e2;white-space:nowrap;left:838px;font-weight:500;">跟踪</div>
<div style="top:125px;height:9px;line-height:9px;font-size:5.9px;color:#e2e2e2;white-space:nowrap;left:864px;font-weight:500;">朗读</div>
<div style="top:125px;height:9px;line-height:9px;font-size:5.9px;color:#e2e2e2;white-space:nowrap;left:889.8px;font-weight:500;">数字人</div>
<svg style="left:913px;top:127.4px;" width="5" height="4" viewBox="0 0 5 4"><path d="M0.4 1.2 L1.4 0.2 L3.6 0.2 L4.6 1.2 L2.5 3.6 Z" fill="#49c4f5"/></svg>
<div style="left:811.8px;top:146.2px;width:241.2px;height:12.6px;background:#1b1b1b;border-radius:2px;"></div>
<div style="left:811.8px;top:146.2px;width:80px;height:12.6px;background:#383838;border-radius:2px;"></div>
<div style="top:146.4px;height:12.4px;line-height:12.4px;font-size:5.3px;color:#e8e8e8;white-space:nowrap;left:751.8px;width:200px;text-align:center;">基础</div>
<div style="top:146.4px;height:12.4px;line-height:12.4px;font-size:5.3px;color:#d0d0d0;white-space:nowrap;left:832.6px;width:200px;text-align:center;">模板</div>
<div style="top:146.4px;height:12.4px;line-height:12.4px;font-size:5.3px;color:#d0d0d0;white-space:nowrap;left:913.4px;width:200px;text-align:center;">花字</div>
<div style="left:811.8px;top:165.2px;width:241.2px;height:0.6px;background:#363636;"></div>
<div style="top:173px;height:8px;line-height:8px;font-size:5.8px;color:#f0f0f0;white-space:nowrap;left:811.8px;font-weight:700;">第 1 段文本</div>
<div style="left:811.8px;top:185px;width:221.8px;height:13.8px;background:#1b1b1b;border-radius:2px;"></div>
<div style="top:185.2px;height:13.6px;line-height:13.6px;font-size:5.7px;color:#8a8a8a;white-space:nowrap;left:817.4px;">彻底告别</div>
<div style="left:1040.4px;top:186.2px;width:12.6px;height:12.2px;background:#444;border-radius:1.6px;"></div>
<svg style="left:1044.4px;top:191px;" width="4.6" height="3" viewBox="0 0 4.6 3"><path d="M0.3 0.3 L4.3 0.3 L2.3 2.7 Z" fill="#aaa"/></svg>
<div style="left:811.8px;top:203px;width:241.2px;height:0.6px;background:#363636;"></div>
<div style="top:210px;height:8px;line-height:8px;font-size:5.6px;color:#f0f0f0;white-space:nowrap;left:811.8px;font-weight:700;">位置大小</div>
<svg style="left:837.6px;top:213.2px;" width="3" height="2" viewBox="0 0 3 2"><path d="M0.2 1.8 L1.5 0.3 L2.8 1.8 Z" fill="#999"/></svg>
<svg style="left:1023px;top:210.4px;" width="7" height="7" viewBox="0 0 7 7"><path d="M1.2 2 A2.8 2.8 0 1 1 0.8 4.4" fill="none" stroke="#ddd" stroke-width="0.8"/><path d="M0.2 0.8 L1.1 2.4 L2.8 1.8" fill="none" stroke="#ddd" stroke-width="0.7"/></svg>
<svg style="left:1036.4px;top:210.8px;" width="17" height="6" viewBox="0 0 17 6"><path d="M1.8 0.8 L0.4 3 L1.8 5.2 M15.2 0.8 L16.6 3 L15.2 5.2" fill="none" stroke="#555" stroke-width="0.7"/><path d="M8 -0.1 L10.9 3 L8 6.1 L5.1 3 Z" fill="none" stroke="#e4e4e4" stroke-width="0.8"/></svg>
<div style="top:231.6px;height:8px;line-height:8px;font-size:5.6px;color:#e0e0e0;white-space:nowrap;left:811.8px;">缩放</div>
<div style="left:841.5px;top:235.2px;width:145.9px;height:0.6px;background:#3d3d3d;"></div>
<div style="left:841.5px;top:235px;width:13.5px;height:1px;background:#f2f2f2;"></div>
<div style="left:853.8px;top:232.4px;width:3.4px;height:6.4px;background:#fff;border-radius:1.6px;"></div>
<div style="left:997.2px;top:230px;width:26.8px;height:10.6px;background:#000;border-radius:1.4px;"></div>
<div style="top:230px;height:10.6px;line-height:10.6px;font-size:5.9px;color:#dcdcdc;white-space:nowrap;left:816.6px;width:200px;text-align:right;">44%</div>
<div style="left:1026px;top:230px;width:7.6px;height:10.6px;background:#3a3a3a;border-radius:1.4px;"></div>
<svg style="left:1027.6px;top:231.9px;" width="4.4" height="6.8" viewBox="0 0 4.4 6.8"><path d="M0.5 2.6 L2.2 0.8 L3.9 2.6 M0.5 4.2 L2.2 6 L3.9 4.2" fill="none" stroke="#ddd" stroke-width="0.7"/></svg>
<svg style="left:1036.4px;top:232.4px;" width="17" height="6" viewBox="0 0 17 6"><path d="M1.8 0.8 L0.4 3 L1.8 5.2 M15.2 0.8 L16.6 3 L15.2 5.2" fill="none" stroke="#555" stroke-width="0.7"/><path d="M8 -0.1 L10.9 3 L8 6.1 L5.1 3 Z" fill="none" stroke="#e4e4e4" stroke-width="0.8"/></svg>
<div style="top:253.6px;height:8px;line-height:8px;font-size:5.6px;color:#e0e0e0;white-space:nowrap;left:811.8px;">等比缩放</div>
<div style="left:1034px;top:253px;width:19px;height:8.8px;background:#08bfcd;border-radius:4.4px;"></div>
<div style="left:1046.7px;top:255.2px;width:4.4px;height:4.4px;background:#fff;border-radius:50%;"></div>
<div style="top:273.2px;height:8px;line-height:8px;font-size:5.6px;color:#e0e0e0;white-space:nowrap;left:811.8px;">位置</div>
<div style="left:841.8px;top:272px;width:34.8px;height:10.6px;background:#000;border-radius:1.4px;"></div>
<div style="top:272px;height:10.6px;line-height:10.6px;font-size:5.8px;color:#777;white-space:nowrap;left:845.4px;">X</div>
<div style="top:272px;height:10.6px;line-height:10.6px;font-size:6.1px;color:#eaeaea;white-space:nowrap;left:666.8px;width:200px;text-align:right;">0</div>
<div style="left:878.4px;top:272px;width:7.2px;height:10.6px;background:#3a3a3a;border-radius:1.4px;"></div>
<svg style="left:879.8px;top:273.9px;" width="4.4" height="6.8" viewBox="0 0 4.4 6.8"><path d="M0.5 2.6 L2.2 0.8 L3.9 2.6 M0.5 4.2 L2.2 6 L3.9 4.2" fill="none" stroke="#ddd" stroke-width="0.7"/></svg>
<div style="left:902.8px;top:272px;width:34.6px;height:10.6px;background:#000;border-radius:1.4px;"></div>
<div style="top:272px;height:10.6px;line-height:10.6px;font-size:5.8px;color:#777;white-space:nowrap;left:906.4px;">Y</div>
<div style="top:272px;height:10.6px;line-height:10.6px;font-size:6.1px;color:#eaeaea;white-space:nowrap;left:731.8px;width:200px;text-align:right;">-512</div>
<div style="left:939.2px;top:272px;width:7.4px;height:10.6px;background:#3a3a3a;border-radius:1.4px;"></div>
<svg style="left:940.7px;top:273.9px;" width="4.4" height="6.8" viewBox="0 0 4.4 6.8"><path d="M0.5 2.6 L2.2 0.8 L3.9 2.6 M0.5 4.2 L2.2 6 L3.9 4.2" fill="none" stroke="#ddd" stroke-width="0.7"/></svg>
<svg style="left:1036.4px;top:274px;" width="17" height="6" viewBox="0 0 17 6"><path d="M1.8 0.8 L0.4 3 L1.8 5.2 M15.2 0.8 L16.6 3 L15.2 5.2" fill="none" stroke="#555" stroke-width="0.7"/><path d="M8 -0.1 L10.9 3 L8 6.1 L5.1 3 Z" fill="none" stroke="#e4e4e4" stroke-width="0.8"/></svg>
<div style="top:293.2px;height:8px;line-height:8px;font-size:5.6px;color:#e0e0e0;white-space:nowrap;left:811.8px;">平面旋转</div>
<div style="left:841.8px;top:292px;width:34.8px;height:10.6px;background:#000;border-radius:1.4px;"></div>
<div style="top:292px;height:10.6px;line-height:10.6px;font-size:6px;color:#dcdcdc;white-space:nowrap;left:666.4px;width:200px;text-align:right;">0.00°</div>
<div style="left:878.4px;top:292px;width:7.2px;height:10.6px;background:#3a3a3a;border-radius:1.4px;"></div>
<svg style="left:879.8px;top:293.9px;" width="4.4" height="6.8" viewBox="0 0 4.4 6.8"><path d="M0.5 2.6 L2.2 0.8 L3.9 2.6 M0.5 4.2 L2.2 6 L3.9 4.2" fill="none" stroke="#ddd" stroke-width="0.7"/></svg>
<div style="left:904px;top:292.2px;width:10.2px;height:10.2px;background:#151515;border-radius:50%;border:0.5px solid #3a3a3a;"></div>
<div style="left:910.4px;top:297px;width:3px;height:0.7px;background:#18bccb;"></div>
<svg style="left:1036.4px;top:294.2px;" width="17" height="6" viewBox="0 0 17 6"><path d="M1.8 0.8 L0.4 3 L1.8 5.2 M15.2 0.8 L16.6 3 L15.2 5.2" fill="none" stroke="#555" stroke-width="0.7"/><path d="M8 -0.1 L10.9 3 L8 6.1 L5.1 3 Z" fill="none" stroke="#e4e4e4" stroke-width="0.8"/></svg>
<div style="left:811.8px;top:311.2px;width:154.8px;height:11.8px;background:#343434;border-radius:2px;"></div>
<svg style="left:817.5px;top:313.6px;" width="7" height="7" viewBox="0 0 7 7"><g fill="none" stroke="#e8e8e8" stroke-width="0.7"><path d="M1 0.6 L1 6.4" /><path d="M2.2 2 L6.4 2 M2.2 4.6 L5 4.6" stroke-width="1.3"/></g></svg>
<svg style="left:836.7px;top:313.6px;" width="7" height="7" viewBox="0 0 7 7"><g fill="none" stroke="#e8e8e8" stroke-width="0.7"><path d="M3.5 0.4 L3.5 6.6"/><path d="M1 2.2 L6 2.2 M1.8 4.6 L5.2 4.6" stroke-width="1.3"/></g></svg>
<svg style="left:855.5px;top:313.6px;" width="7" height="7" viewBox="0 0 7 7"><g fill="none" stroke="#e8e8e8" stroke-width="0.7"><path d="M6 0.6 L6 6.4"/><path d="M0.6 2 L4.8 2 M2 4.6 L4.8 4.6" stroke-width="1.3"/></g></svg>
<svg style="left:873.3px;top:313.6px;" width="7" height="7" viewBox="0 0 7 7"><g fill="none" stroke="#e8e8e8" stroke-width="0.7"><path d="M0.6 1 L6.4 1"/><path d="M2.2 2.2 L2.2 6.4 M4.6 2.2 L4.6 5" stroke-width="1.3"/></g></svg>
<svg style="left:891.7px;top:313.6px;" width="7" height="7" viewBox="0 0 7 7"><g fill="none" stroke="#e8e8e8" stroke-width="0.7"><path d="M0.4 3.5 L6.6 3.5"/><path d="M2.2 1 L2.2 6 M4.6 1.8 L4.6 5.2" stroke-width="1.3"/></g></svg>
<svg style="left:910.5px;top:313.6px;" width="7" height="7" viewBox="0 0 7 7"><g fill="none" stroke="#e8e8e8" stroke-width="0.7"><path d="M0.6 6 L6.4 6"/><path d="M2.2 0.6 L2.2 4.8 M4.6 2 L4.6 4.8" stroke-width="1.3"/></g></svg>
<div style="left:926.3px;top:312.6px;width:0.6px;height:9px;background:#444;"></div>
<svg style="left:934.2px;top:313.6px;" width="7" height="7" viewBox="0 0 7 7"><g fill="none" stroke="#454545" stroke-width="0.7"><path d="M0.8 0.6 L0.8 6.4 M6.2 0.6 L6.2 6.4"/><path d="M2.6 2 L2.6 5 M4.4 2 L4.4 5" stroke-width="1.1"/></g></svg>
<svg style="left:953px;top:313.6px;" width="7" height="7" viewBox="0 0 7 7"><g fill="none" stroke="#454545" stroke-width="0.7"><path d="M0.6 0.8 L6.4 0.8 M0.6 6.2 L6.4 6.2"/><path d="M2 2.6 L5 2.6 M2 4.4 L5 4.4" stroke-width="1.1"/></g></svg>
<div style="left:968px;top:388px;width:37.6px;height:10px;background:#3f3f3f;border-radius:1.6px;"></div>
<div style="top:388px;height:10px;line-height:10px;font-size:5.5px;color:#f0f0f0;white-space:nowrap;left:886.8px;width:200px;text-align:center;font-weight:700;">保存预设</div>
<div style="left:1010.2px;top:388px;width:42.8px;height:10px;background:#3f3f3f;border-radius:1.6px;"></div>
<div style="top:388px;height:10px;line-height:10px;font-size:5.5px;color:#f0f0f0;white-space:nowrap;left:931.6px;width:200px;text-align:center;font-weight:700;">添加到品牌库</div>
<div style="left:128.4px;top:422px;width:930.6px;height:0.7px;background:#1c1c1c;"></div>
<div style="left:64px;top:406px;width:995px;height:1px;background:#1c1c1c;"></div>
<div style="left:64px;top:462px;width:64.4px;height:13.2px;background:#282828;"></div>
<div style="left:154.6px;top:462px;width:901.4px;height:13.2px;background:#2a2a2a;"></div>
<div style="left:64px;top:475.8px;width:64.4px;height:13px;background:#282828;"></div>
<div style="left:154.6px;top:475.8px;width:901.4px;height:13px;background:#2a2a2a;"></div>
<div style="left:64px;top:489.4px;width:64.4px;height:12.8px;background:#282828;"></div>
<div style="left:154.6px;top:489.4px;width:901.4px;height:12.8px;background:#303030;"></div>
<div style="left:64px;top:502.8px;width:64.4px;height:13.2px;background:#282828;"></div>
<div style="left:154.6px;top:502.8px;width:901.4px;height:13.2px;background:#2a2a2a;"></div>
<div style="left:64px;top:516.8px;width:64.4px;height:39.2px;background:#282828;"></div>
<div style="left:154.6px;top:516.8px;width:901.4px;height:39.2px;background:#2a2a2a;"></div>
<div style="left:64px;top:556.8px;width:64.4px;height:28px;background:#282828;"></div>
<div style="left:154.6px;top:556.8px;width:901.4px;height:28px;background:#2a2a2a;"></div>
<div style="left:64px;top:585.4px;width:64.4px;height:28.8px;background:#282828;"></div>
<div style="left:154.6px;top:585.4px;width:901.4px;height:28.8px;background:#2a2a2a;"></div>
<div style="left:64px;top:614.8px;width:64.4px;height:23.2px;background:#282828;"></div>
<div style="left:154.6px;top:614.8px;width:901.4px;height:23.2px;background:#2a2a2a;"></div>
<div style="left:128.2px;top:436px;width:0.6px;height:202px;background:#1a1a1a;"></div>
<svg style="left:68.6px;top:411px;" width="6.4" height="6.4" viewBox="0 0 6.4 6.4"><path d="M3.2 0.4 L3.2 6 M0.4 3.2 L6 3.2" stroke="#eee" stroke-width="0.9"/></svg>
<div style="left:82.2px;top:410.4px;width:0.6px;height:7.6px;background:#3a3a3a;"></div>
<svg style="left:89.4px;top:409.8px;" width="8" height="9.6" viewBox="0 0 8 9.6"><path d="M1 0.6 L1 6.8 L2.9 5.4 L4.3 8.6 L5.7 7.9 L4.3 4.9 L6.8 4.7 Z" fill="none" stroke="#eee" stroke-width="0.75" stroke-linejoin="round"/></svg>
<svg style="left:102.8px;top:413px;" width="4.6" height="3" viewBox="0 0 4.6 3"><path d="M0.4 0.5 L2.3 2.3 L4.2 0.5" fill="none" stroke="#ddd" stroke-width="0.8"/></svg>
<div style="left:114.8px;top:410.4px;width:0.6px;height:7.6px;background:#3a3a3a;"></div>
<svg style="left:126.4px;top:411px;" width="6.6" height="6.4" viewBox="0 0 6.6 6.4"><path d="M0.6 1.4 L4 1.4 A2 2 0 0 1 4 5.4 L1.4 5.4" fill="none" stroke="#4a4a4a" stroke-width="0.8"/><path d="M1.8 0.2 L0.5 1.4 L1.8 2.6" fill="none" stroke="#4a4a4a" stroke-width="0.7"/></svg>
<svg style="left:144.4px;top:411px;" width="6.6" height="6.4" viewBox="0 0 6.6 6.4"><path d="M6 1.4 L2.6 1.4 A2 2 0 0 0 2.6 5.4 L5.2 5.4" fill="none" stroke="#4a4a4a" stroke-width="0.8"/><path d="M4.8 0.2 L6.1 1.4 L4.8 2.6" fill="none" stroke="#4a4a4a" stroke-width="0.7"/></svg>
<svg style="left:163.6px;top:410.4px;" width="6.8" height="7.6" viewBox="0 0 6.8 7.6"><path d="M3.4 0.2 L3.4 7.4" stroke="#f0f0f0" stroke-width="0.8"/><path d="M0.6 0.8 L2 0.8 L2 6.8 L0.6 6.8" fill="none" stroke="#f0f0f0" stroke-width="0.8"/><path d="M6.2 0.8 L4.8 0.8 L4.8 6.8 L6.2 6.8" fill="none" stroke="#f0f0f0" stroke-width="0.8"/></svg>
<svg style="left:182.4px;top:410.4px;" width="6.8" height="7.6" viewBox="0 0 6.8 7.6"><path d="M3.4 0.2 L3.4 7.4" stroke="#f0f0f0" stroke-width="0.8"/><path d="M0.6 0.8 L2 0.8 L2 6.8 L0.6 6.8" fill="none" stroke="#f0f0f0" stroke-width="0.8"/><path d="M6.2 0.8 L4.8 0.8 L4.8 6.8 L6.2 6.8" fill="none" stroke="#777" stroke-width="0.8"/></svg>
<svg style="left:201.2px;top:410.4px;" width="6.8" height="7.6" viewBox="0 0 6.8 7.6"><path d="M3.4 0.2 L3.4 7.4" stroke="#f0f0f0" stroke-width="0.8"/><path d="M0.6 0.8 L2 0.8 L2 6.8 L0.6 6.8" fill="none" stroke="#777" stroke-width="0.8"/><path d="M6.2 0.8 L4.8 0.8 L4.8 6.8 L6.2 6.8" fill="none" stroke="#f0f0f0" stroke-width="0.8"/></svg>
<svg style="left:220.2px;top:410.4px;" width="7.2" height="7.8" viewBox="0 0 7.2 7.8"><path d="M1.2 1.8 L1.2 7 L6 7 L6 1.8 M0.2 1.8 L7 1.8 M2.6 1.6 L2.6 0.5 L4.6 0.5 L4.6 1.6" fill="none" stroke="#f0f0f0" stroke-width="0.9"/></svg>
<svg style="left:812px;top:410px;" width="7" height="9" viewBox="0 0 7 9"><rect x="2" y="0.5" width="3" height="5" rx="1.5" fill="none" stroke="#ddd" stroke-width="0.8"/><path d="M0.7 4 A2.8 2.8 0 0 0 6.3 4 M3.5 6.8 L3.5 8.4 M2 8.4 L5 8.4" fill="none" stroke="#ddd" stroke-width="0.7"/></svg>
<div style="left:827.8px;top:410.4px;width:0.6px;height:7.6px;background:#3a3a3a;"></div>
<div style="left:834.8px;top:408px;width:12.4px;height:12.2px;background:#161616;border-radius:1.6px;"></div>
<svg style="left:834.8px;top:408px;" width="12.4" height="12.2" viewBox="0 0 12.4 12.2"><rect x="2" y="4.6" width="3" height="3" fill="#16c4d4"/><rect x="7.4" y="4.6" width="3" height="3" fill="#16c4d4"/><path d="M5 6.1 L7.4 6.1" stroke="#16c4d4" stroke-width="0.8"/></svg>
<div style="left:853.6px;top:408px;width:12.4px;height:12.2px;background:#161616;border-radius:1.6px;"></div>
<svg style="left:853.6px;top:408px;" width="12.4" height="12.2" viewBox="0 0 12.4 12.2"><rect x="2.6" y="4.6" width="7.2" height="3" fill="#16c4d4"/><path d="M6.2 2.4 L6.2 9.8 M1.4 6.1 L11 6.1" stroke="#16c4d4" stroke-width="0.6" stroke-dasharray="0.8 0.6"/></svg>
<div style="left:872.2px;top:408px;width:20.2px;height:12.2px;background:#161616;border-radius:1.6px;"></div>
<svg style="left:872.2px;top:408px;" width="20.2" height="12.2" viewBox="0 0 20.2 12.2"><rect x="2" y="4.6" width="3.4" height="3" fill="#16c4d4"/><rect x="6.6" y="4.6" width="3.4" height="3" fill="none" stroke="#16c4d4" stroke-width="0.7"/><path d="M13.2 0 L13.2 12.2" stroke="#2a2a2a" stroke-width="0.6"/><path d="M15.2 5.4 L16.8 7 L18.4 5.4" fill="none" stroke="#ddd" stroke-width="0.8"/></svg>
<div style="left:898.6px;top:408px;width:20px;height:12.2px;background:#161616;border-radius:1.6px;"></div>
<svg style="left:898.6px;top:408px;" width="20" height="12.2" viewBox="0 0 20 12.2"><rect x="1.6" y="4.8" width="3.6" height="2.8" fill="#16c4d4"/><path d="M6.4 2.4 L6.4 10" stroke="#16c4d4" stroke-width="0.8"/><rect x="7.6" y="4" width="3" height="4.4" fill="#16c4d4"/><path d="M13.2 0 L13.2 12.2" stroke="#2a2a2a" stroke-width="0.6"/><path d="M15.2 5.4 L16.8 7 L18.4 5.4" fill="none" stroke="#ddd" stroke-width="0.8"/></svg>
<div style="left:925px;top:410.4px;width:0.6px;height:7.6px;background:#3a3a3a;"></div>
<svg style="left:933.2px;top:410.6px;" width="9" height="8" viewBox="0 0 9 8"><rect x="0.5" y="0.6" width="7.4" height="4.6" rx="0.6" fill="none" stroke="#ddd" stroke-width="0.8"/><circle cx="6" cy="5" r="1.6" fill="#222" stroke="#ddd" stroke-width="0.7"/><path d="M7.2 6.2 L8.2 7.4" stroke="#ddd" stroke-width="0.7"/></svg>
<svg style="left:953.2px;top:410.6px;" width="7.2" height="7.2" viewBox="0 0 7.2 7.2"><circle cx="3.6" cy="3.6" r="3" fill="none" stroke="#ddd" stroke-width="0.8"/><path d="M2.2 3.6 L5 3.6" stroke="#ddd" stroke-width="0.8"/></svg>
<div style="left:969.2px;top:414px;width:49.8px;height:0.6px;background:#444;"></div>
<div style="left:969.2px;top:413.8px;width:10.8px;height:1px;background:#f0f0f0;"></div>
<div style="left:978.8px;top:411.2px;width:3.4px;height:6.2px;background:#fff;border-radius:1.4px;"></div>
<svg style="left:1028.6px;top:410.6px;" width="7.2" height="7.2" viewBox="0 0 7.2 7.2"><circle cx="3.6" cy="3.6" r="3" fill="none" stroke="#ddd" stroke-width="0.8"/><path d="M2.2 3.6 L5 3.6 M3.6 2.2 L3.6 5" stroke="#ddd" stroke-width="0.8"/></svg>
<svg style="left:1049.8px;top:411px;" width="1.6" height="6.6" viewBox="0 0 1.6 6.6"><circle cx="0.8" cy="0.8" r="0.6" fill="#ddd"/><circle cx="0.8" cy="3.3" r="0.6" fill="#ddd"/><circle cx="0.8" cy="5.8" r="0.6" fill="#ddd"/></svg>
<svg style="left:64px;top:0px;" width="992" height="696" viewBox="0 0 992 696"><defs><clipPath id="rc"><rect x="0" y="420" width="992" height="14"/></clipPath></defs><g clip-path="url(#rc)"><path d="M89.90 424.2 L89.90 430.4" stroke="#555" stroke-width="0.6"/><text x="91.50" y="430" font-size="5.6" fill="#6c6c6c" font-family="Liberation Sans, sans-serif">00:00</text><path d="M99.87 424.2 L99.87 426.4" stroke="#444" stroke-width="0.5"/><path d="M109.84 424.2 L109.84 426.4" stroke="#444" stroke-width="0.5"/><path d="M119.81 424.2 L119.81 426.4" stroke="#444" stroke-width="0.5"/><path d="M129.78 424.2 L129.78 426.4" stroke="#444" stroke-width="0.5"/><path d="M139.75 424.2 L139.75 426.4" stroke="#444" stroke-width="0.5"/><path d="M149.72 424.2 L149.72 426.4" stroke="#444" stroke-width="0.5"/><path d="M159.69 424.2 L159.69 426.4" stroke="#444" stroke-width="0.5"/><path d="M169.66 424.2 L169.66 426.4" stroke="#444" stroke-width="0.5"/><path d="M179.63 424.2 L179.63 426.4" stroke="#444" stroke-width="0.5"/><path d="M189.60 424.2 L189.60 430.4" stroke="#555" stroke-width="0.6"/><text x="191.20" y="430" font-size="5.6" fill="#6c6c6c" font-family="Liberation Sans, sans-serif">00:03</text><path d="M199.57 424.2 L199.57 426.4" stroke="#444" stroke-width="0.5"/><path d="M209.54 424.2 L209.54 426.4" stroke="#444" stroke-width="0.5"/><path d="M219.51 424.2 L219.51 426.4" stroke="#444" stroke-width="0.5"/><path d="M229.48 424.2 L229.48 426.4" stroke="#444" stroke-width="0.5"/><path d="M239.45 424.2 L239.45 426.4" stroke="#444" stroke-width="0.5"/><path d="M249.42 424.2 L249.42 426.4" stroke="#444" stroke-width="0.5"/><path d="M259.39 424.2 L259.39 426.4" stroke="#444" stroke-width="0.5"/><path d="M269.36 424.2 L269.36 426.4" stroke="#444" stroke-width="0.5"/><path d="M279.33 424.2 L279.33 426.4" stroke="#444" stroke-width="0.5"/><path d="M289.30 424.2 L289.30 430.4" stroke="#555" stroke-width="0.6"/><text x="290.90" y="430" font-size="5.6" fill="#6c6c6c" font-family="Liberation Sans, sans-serif">00:06</text><path d="M299.27 424.2 L299.27 426.4" stroke="#444" stroke-width="0.5"/><path d="M309.24 424.2 L309.24 426.4" stroke="#444" stroke-width="0.5"/><path d="M319.21 424.2 L319.21 426.4" stroke="#444" stroke-width="0.5"/><path d="M329.18 424.2 L329.18 426.4" stroke="#444" stroke-width="0.5"/><path d="M339.15 424.2 L339.15 426.4" stroke="#444" stroke-width="0.5"/><path d="M349.12 424.2 L349.12 426.4" stroke="#444" stroke-width="0.5"/><path d="M359.09 424.2 L359.09 426.4" stroke="#444" stroke-width="0.5"/><path d="M369.06 424.2 L369.06 426.4" stroke="#444" stroke-width="0.5"/><path d="M379.03 424.2 L379.03 426.4" stroke="#444" stroke-width="0.5"/><path d="M389.00 424.2 L389.00 430.4" stroke="#555" stroke-width="0.6"/><text x="390.60" y="430" font-size="5.6" fill="#6c6c6c" font-family="Liberation Sans, sans-serif">00:09</text><path d="M398.97 424.2 L398.97 426.4" stroke="#444" stroke-width="0.5"/><path d="M408.94 424.2 L408.94 426.4" stroke="#444" stroke-width="0.5"/><path d="M418.91 424.2 L418.91 426.4" stroke="#444" stroke-width="0.5"/><path d="M428.88 424.2 L428.88 426.4" stroke="#444" stroke-width="0.5"/><path d="M438.85 424.2 L438.85 426.4" stroke="#444" stroke-width="0.5"/><path d="M448.82 424.2 L448.82 426.4" stroke="#444" stroke-width="0.5"/><path d="M458.79 424.2 L458.79 426.4" stroke="#444" stroke-width="0.5"/><path d="M468.76 424.2 L468.76 426.4" stroke="#444" stroke-width="0.5"/><path d="M478.73 424.2 L478.73 426.4" stroke="#444" stroke-width="0.5"/><path d="M488.70 424.2 L488.70 430.4" stroke="#555" stroke-width="0.6"/><text x="490.30" y="430" font-size="5.6" fill="#6c6c6c" font-family="Liberation Sans, sans-serif">00:12</text><path d="M498.67 424.2 L498.67 426.4" stroke="#444" stroke-width="0.5"/><path d="M508.64 424.2 L508.64 426.4" stroke="#444" stroke-width="0.5"/><path d="M518.61 424.2 L518.61 426.4" stroke="#444" stroke-width="0.5"/><path d="M528.58 424.2 L528.58 426.4" stroke="#444" stroke-width="0.5"/><path d="M538.55 424.2 L538.55 426.4" stroke="#444" stroke-width="0.5"/><path d="M548.52 424.2 L548.52 426.4" stroke="#444" stroke-width="0.5"/><path d="M558.49 424.2 L558.49 426.4" stroke="#444" stroke-width="0.5"/><path d="M568.46 424.2 L568.46 426.4" stroke="#444" stroke-width="0.5"/><path d="M578.43 424.2 L578.43 426.4" stroke="#444" stroke-width="0.5"/><path d="M588.39 424.2 L588.39 430.4" stroke="#555" stroke-width="0.6"/><text x="590.00" y="430" font-size="5.6" fill="#6c6c6c" font-family="Liberation Sans, sans-serif">00:15</text><path d="M598.36 424.2 L598.36 426.4" stroke="#444" stroke-width="0.5"/><path d="M608.33 424.2 L608.33 426.4" stroke="#444" stroke-width="0.5"/><path d="M618.30 424.2 L618.30 426.4" stroke="#444" stroke-width="0.5"/><path d="M628.27 424.2 L628.27 426.4" stroke="#444" stroke-width="0.5"/><path d="M638.24 424.2 L638.24 426.4" stroke="#444" stroke-width="0.5"/><path d="M648.21 424.2 L648.21 426.4" stroke="#444" stroke-width="0.5"/><path d="M658.18 424.2 L658.18 426.4" stroke="#444" stroke-width="0.5"/><path d="M668.15 424.2 L668.15 426.4" stroke="#444" stroke-width="0.5"/><path d="M678.12 424.2 L678.12 426.4" stroke="#444" stroke-width="0.5"/><path d="M688.09 424.2 L688.09 430.4" stroke="#555" stroke-width="0.6"/><text x="689.69" y="430" font-size="5.6" fill="#6c6c6c" font-family="Liberation Sans, sans-serif">00:18</text><path d="M698.06 424.2 L698.06 426.4" stroke="#444" stroke-width="0.5"/><path d="M708.03 424.2 L708.03 426.4" stroke="#444" stroke-width="0.5"/><path d="M718.00 424.2 L718.00 426.4" stroke="#444" stroke-width="0.5"/><path d="M727.97 424.2 L727.97 426.4" stroke="#444" stroke-width="0.5"/><path d="M737.94 424.2 L737.94 426.4" stroke="#444" stroke-width="0.5"/><path d="M747.91 424.2 L747.91 426.4" stroke="#444" stroke-width="0.5"/><path d="M757.88 424.2 L757.88 426.4" stroke="#444" stroke-width="0.5"/><path d="M767.85 424.2 L767.85 426.4" stroke="#444" stroke-width="0.5"/><path d="M777.82 424.2 L777.82 426.4" stroke="#444" stroke-width="0.5"/><path d="M787.79 424.2 L787.79 430.4" stroke="#555" stroke-width="0.6"/><text x="789.39" y="430" font-size="5.6" fill="#6c6c6c" font-family="Liberation Sans, sans-serif">00:21</text><path d="M797.76 424.2 L797.76 426.4" stroke="#444" stroke-width="0.5"/><path d="M807.73 424.2 L807.73 426.4" stroke="#444" stroke-width="0.5"/><path d="M817.70 424.2 L817.70 426.4" stroke="#444" stroke-width="0.5"/><path d="M827.67 424.2 L827.67 426.4" stroke="#444" stroke-width="0.5"/><path d="M837.64 424.2 L837.64 426.4" stroke="#444" stroke-width="0.5"/><path d="M847.61 424.2 L847.61 426.4" stroke="#444" stroke-width="0.5"/><path d="M857.58 424.2 L857.58 426.4" stroke="#444" stroke-width="0.5"/><path d="M867.55 424.2 L867.55 426.4" stroke="#444" stroke-width="0.5"/><path d="M877.52 424.2 L877.52 426.4" stroke="#444" stroke-width="0.5"/><path d="M887.49 424.2 L887.49 430.4" stroke="#555" stroke-width="0.6"/><text x="889.09" y="430" font-size="5.6" fill="#6c6c6c" font-family="Liberation Sans, sans-serif">00:24</text><path d="M897.46 424.2 L897.46 426.4" stroke="#444" stroke-width="0.5"/><path d="M907.43 424.2 L907.43 426.4" stroke="#444" stroke-width="0.5"/><path d="M917.40 424.2 L917.40 426.4" stroke="#444" stroke-width="0.5"/><path d="M927.37 424.2 L927.37 426.4" stroke="#444" stroke-width="0.5"/><path d="M937.34 424.2 L937.34 426.4" stroke="#444" stroke-width="0.5"/><path d="M947.31 424.2 L947.31 426.4" stroke="#444" stroke-width="0.5"/><path d="M957.28 424.2 L957.28 426.4" stroke="#444" stroke-width="0.5"/><path d="M967.25 424.2 L967.25 426.4" stroke="#444" stroke-width="0.5"/><path d="M977.22 424.2 L977.22 426.4" stroke="#444" stroke-width="0.5"/><path d="M987.19 424.2 L987.19 430.4" stroke="#555" stroke-width="0.6"/><text x="988.79" y="430" font-size="5.6" fill="#6c6c6c" font-family="Liberation Sans, sans-serif">00:27</text></g></svg>
<svg style="left:67px;top:465.9px;" width="7.2" height="5.6" viewBox="0 0 7.2 5.6"><g fill="none" stroke="#5a5a5a" stroke-width="0.6"><path d="M0.4 1 L0.4 0.4 L3.4 0.4 L3.4 1 M1.9 0.4 L1.9 5.2 M1.2 5.2 L2.6 5.2 M4.6 0.4 L6.6 0.4 M5.6 0.4 L5.6 5.2 M4.6 5.2 L6.6 5.2"/></g></svg>
<svg style="left:80.5px;top:465.9px;" width="5.6" height="5.4" viewBox="0 0 5.6 5.4"><path d="M0.5 2.6 L5.1 2.6 L5.1 4.4 Q5.1 5 4.5 5 L1.1 5 Q0.5 5 0.5 4.4 Z" fill="#b4b4b4"/><path d="M1.6 2.6 L1.6 1.7 A1.2 1.1 0 0 1 4 1.7 L4 2.6" fill="none" stroke="#b4b4b4" stroke-width="0.7"/><rect x="2" y="3.3" width="1.6" height="0.8" fill="#282828"/></svg>
<svg style="left:92.4px;top:466.6px;" width="6.8" height="4.2" viewBox="0 0 6.8 4.2"><path d="M0.2 2.1 C1.6 0.1 5.2 0.1 6.6 2.1 C5.2 4.1 1.6 4.1 0.2 2.1 Z" fill="#b4b4b4"/><circle cx="3.4" cy="2.1" r="1" fill="#282828"/><circle cx="3.4" cy="2.1" r="0.4" fill="#b4b4b4"/></svg>
<svg style="left:67px;top:479.3px;" width="7.2" height="5.6" viewBox="0 0 7.2 5.6"><g fill="none" stroke="#5a5a5a" stroke-width="0.6"><path d="M0.4 1 L0.4 0.4 L3.4 0.4 L3.4 1 M1.9 0.4 L1.9 5.2 M1.2 5.2 L2.6 5.2 M4.6 0.4 L6.6 0.4 M5.6 0.4 L5.6 5.2 M4.6 5.2 L6.6 5.2"/></g></svg>
<svg style="left:80.5px;top:479.3px;" width="5.6" height="5.4" viewBox="0 0 5.6 5.4"><path d="M0.5 2.6 L5.1 2.6 L5.1 4.4 Q5.1 5 4.5 5 L1.1 5 Q0.5 5 0.5 4.4 Z" fill="#b4b4b4"/><path d="M1.6 2.6 L1.6 1.7 A1.2 1.1 0 0 1 4 1.7 L4 2.6" fill="none" stroke="#b4b4b4" stroke-width="0.7"/><rect x="2" y="3.3" width="1.6" height="0.8" fill="#282828"/></svg>
<svg style="left:92.4px;top:480px;" width="6.8" height="4.2" viewBox="0 0 6.8 4.2"><path d="M0.2 2.1 C1.6 0.1 5.2 0.1 6.6 2.1 C5.2 4.1 1.6 4.1 0.2 2.1 Z" fill="#b4b4b4"/><circle cx="3.4" cy="2.1" r="1" fill="#282828"/><circle cx="3.4" cy="2.1" r="0.4" fill="#b4b4b4"/></svg>
<svg style="left:67px;top:492.8px;" width="7.2" height="5.6" viewBox="0 0 7.2 5.6"><g fill="none" stroke="#5a5a5a" stroke-width="0.6"><path d="M0.4 1 L0.4 0.4 L3.4 0.4 L3.4 1 M1.9 0.4 L1.9 5.2 M1.2 5.2 L2.6 5.2 M4.6 0.4 L6.6 0.4 M5.6 0.4 L5.6 5.2 M4.6 5.2 L6.6 5.2"/></g></svg>
<svg style="left:80.5px;top:492.8px;" width="5.6" height="5.4" viewBox="0 0 5.6 5.4"><path d="M0.5 2.6 L5.1 2.6 L5.1 4.4 Q5.1 5 4.5 5 L1.1 5 Q0.5 5 0.5 4.4 Z" fill="#b4b4b4"/><path d="M1.6 2.6 L1.6 1.7 A1.2 1.1 0 0 1 4 1.7 L4 2.6" fill="none" stroke="#b4b4b4" stroke-width="0.7"/><rect x="2" y="3.3" width="1.6" height="0.8" fill="#282828"/></svg>
<svg style="left:92.4px;top:493.5px;" width="6.8" height="4.2" viewBox="0 0 6.8 4.2"><path d="M0.2 2.1 C1.6 0.1 5.2 0.1 6.6 2.1 C5.2 4.1 1.6 4.1 0.2 2.1 Z" fill="#b4b4b4"/><circle cx="3.4" cy="2.1" r="1" fill="#282828"/><circle cx="3.4" cy="2.1" r="0.4" fill="#b4b4b4"/></svg>
<svg style="left:67.2px;top:506.2px;" width="6.8" height="6.4" viewBox="0 0 6.8 6.4"><path d="M3.4 0.4 L4.2 1.8 L5.8 1.5 L5.3 3 L6.3 4.3 L4.7 4.3 L4.2 5.8 L3.1 4.7 L1.5 5 L2 3.5 L0.9 2.4 L2.5 2.1 Z" fill="none" stroke="#5a5a5a" stroke-width="0.6"/></svg>
<svg style="left:80.5px;top:506.5px;" width="5.6" height="5.4" viewBox="0 0 5.6 5.4"><path d="M0.5 2.6 L5.1 2.6 L5.1 4.4 Q5.1 5 4.5 5 L1.1 5 Q0.5 5 0.5 4.4 Z" fill="#b4b4b4"/><path d="M1.6 2.6 L1.6 1.7 A1.2 1.1 0 0 1 4 1.7 L4 2.6" fill="none" stroke="#b4b4b4" stroke-width="0.7"/><rect x="2" y="3.3" width="1.6" height="0.8" fill="#282828"/></svg>
<svg style="left:92.4px;top:507.2px;" width="6.8" height="4.2" viewBox="0 0 6.8 4.2"><path d="M0.2 2.1 C1.6 0.1 5.2 0.1 6.6 2.1 C5.2 4.1 1.6 4.1 0.2 2.1 Z" fill="#b4b4b4"/><circle cx="3.4" cy="2.1" r="1" fill="#282828"/><circle cx="3.4" cy="2.1" r="0.4" fill="#b4b4b4"/></svg>
<svg style="left:67.4px;top:533.6px;" width="6.6" height="5.2" viewBox="0 0 6.6 5.2"><rect x="0.4" y="0.4" width="5.8" height="4.4" rx="0.6" fill="none" stroke="#5a5a5a" stroke-width="0.6"/><path d="M2.8 1.8 L4 2.6 L2.8 3.4 Z" fill="#5a5a5a"/></svg>
<svg style="left:80.5px;top:533.5px;" width="5.6" height="5.4" viewBox="0 0 5.6 5.4"><path d="M0.5 2.6 L5.1 2.6 L5.1 4.4 Q5.1 5 4.5 5 L1.1 5 Q0.5 5 0.5 4.4 Z" fill="#b4b4b4"/><path d="M1.6 2.6 L1.6 1.7 A1.2 1.1 0 0 1 4 1.7 L4 2.6" fill="none" stroke="#b4b4b4" stroke-width="0.7"/><rect x="2" y="3.3" width="1.6" height="0.8" fill="#282828"/></svg>
<svg style="left:92.4px;top:534.2px;" width="6.8" height="4.2" viewBox="0 0 6.8 4.2"><path d="M0.2 2.1 C1.6 0.1 5.2 0.1 6.6 2.1 C5.2 4.1 1.6 4.1 0.2 2.1 Z" fill="#b4b4b4"/><circle cx="3.4" cy="2.1" r="1" fill="#282828"/><circle cx="3.4" cy="2.1" r="0.4" fill="#b4b4b4"/></svg>
<svg style="left:105px;top:533.9px;" width="6" height="4.8" viewBox="0 0 6 4.8"><path d="M0.4 1.6 L1.6 1.6 L3 0.4 L3 4.4 L1.6 3.2 L0.4 3.2 Z" fill="#b4b4b4"/><path d="M4 1.2 C4.8 1.8 4.8 3 4 3.6" fill="none" stroke="#b4b4b4" stroke-width="0.6"/></svg>
<div style="top:532.3px;height:8px;line-height:8px;font-size:5px;color:#ccc;white-space:nowrap;left:115.8px;width:10px;text-align:center;font-weight:700;">S</div>
<svg style="left:67.6px;top:567.8px;" width="6" height="6" viewBox="0 0 6 6"><circle cx="3" cy="3" r="2.6" fill="none" stroke="#6a6a6a" stroke-width="0.6"/><path d="M3.2 3.6 L3.2 1.4 L4.2 1.9" fill="none" stroke="#6a6a6a" stroke-width="0.6"/></svg>
<svg style="left:80.5px;top:568px;" width="5.6" height="5.4" viewBox="0 0 5.6 5.4"><path d="M0.5 2.6 L5.1 2.6 L5.1 4.4 Q5.1 5 4.5 5 L1.1 5 Q0.5 5 0.5 4.4 Z" fill="#b4b4b4"/><path d="M1.6 2.6 L1.6 1.7 A1.2 1.1 0 0 1 4 1.7 L4 2.6" fill="none" stroke="#b4b4b4" stroke-width="0.7"/><rect x="2" y="3.3" width="1.6" height="0.8" fill="#282828"/></svg>
<svg style="left:105px;top:568.4px;" width="6" height="4.8" viewBox="0 0 6 4.8"><path d="M0.4 1.6 L1.6 1.6 L3 0.4 L3 4.4 L1.6 3.2 L0.4 3.2 Z" fill="#b4b4b4"/><path d="M4 1.2 C4.8 1.8 4.8 3 4 3.6" fill="none" stroke="#b4b4b4" stroke-width="0.6"/></svg>
<div style="top:566.8px;height:8px;line-height:8px;font-size:5px;color:#ccc;white-space:nowrap;left:115.8px;width:10px;text-align:center;font-weight:700;">S</div>
<svg style="left:67.6px;top:596.6px;" width="6" height="6" viewBox="0 0 6 6"><circle cx="3" cy="3" r="2.6" fill="none" stroke="#6a6a6a" stroke-width="0.6"/><path d="M3.2 3.6 L3.2 1.4 L4.2 1.9" fill="none" stroke="#6a6a6a" stroke-width="0.6"/></svg>
<svg style="left:80.5px;top:596.8px;" width="5.6" height="5.4" viewBox="0 0 5.6 5.4"><path d="M0.5 2.6 L5.1 2.6 L5.1 4.4 Q5.1 5 4.5 5 L1.1 5 Q0.5 5 0.5 4.4 Z" fill="#b4b4b4"/><path d="M1.6 2.6 L1.6 1.7 A1.2 1.1 0 0 1 4 1.7 L4 2.6" fill="none" stroke="#b4b4b4" stroke-width="0.7"/><rect x="2" y="3.3" width="1.6" height="0.8" fill="#282828"/></svg>
<svg style="left:105px;top:597.2px;" width="6" height="4.8" viewBox="0 0 6 4.8"><path d="M0.4 1.6 L1.6 1.6 L3 0.4 L3 4.4 L1.6 3.2 L0.4 3.2 Z" fill="#b4b4b4"/><path d="M4 1.2 C4.8 1.8 4.8 3 4 3.6" fill="none" stroke="#b4b4b4" stroke-width="0.6"/></svg>
<div style="top:595.6px;height:8px;line-height:8px;font-size:5px;color:#ccc;white-space:nowrap;left:115.8px;width:10px;text-align:center;font-weight:700;">S</div>
<svg style="left:67.6px;top:625.4px;" width="6" height="6" viewBox="0 0 6 6"><circle cx="3" cy="3" r="2.6" fill="none" stroke="#6a6a6a" stroke-width="0.6"/><path d="M3.2 3.6 L3.2 1.4 L4.2 1.9" fill="none" stroke="#6a6a6a" stroke-width="0.6"/></svg>
<svg style="left:80.5px;top:625.6px;" width="5.6" height="5.4" viewBox="0 0 5.6 5.4"><path d="M0.5 2.6 L5.1 2.6 L5.1 4.4 Q5.1 5 4.5 5 L1.1 5 Q0.5 5 0.5 4.4 Z" fill="#b4b4b4"/><path d="M1.6 2.6 L1.6 1.7 A1.2 1.1 0 0 1 4 1.7 L4 2.6" fill="none" stroke="#b4b4b4" stroke-width="0.7"/><rect x="2" y="3.3" width="1.6" height="0.8" fill="#282828"/></svg>
<svg style="left:105px;top:626px;" width="6" height="4.8" viewBox="0 0 6 4.8"><path d="M0.4 1.6 L1.6 1.6 L3 0.4 L3 4.4 L1.6 3.2 L0.4 3.2 Z" fill="#b4b4b4"/><path d="M4 1.2 C4.8 1.8 4.8 3 4 3.6" fill="none" stroke="#b4b4b4" stroke-width="0.6"/></svg>
<div style="top:624.4px;height:8px;line-height:8px;font-size:5px;color:#ccc;white-space:nowrap;left:115.8px;width:10px;text-align:center;font-weight:700;">S</div>
<div style="left:130.8px;top:527px;width:19.2px;height:19.4px;background:#373737;border-radius:1.6px;"></div>
<div style="top:527px;height:19.4px;line-height:19.4px;font-size:5.6px;color:#e8e8e8;white-space:nowrap;left:40.4px;width:200px;text-align:center;font-weight:500;">封面</div>
<div style="left:165.8px;top:462.8px;width:45.5px;height:11.4px;background:#a9513c;border-radius:1.8px;overflow:hidden;"><div style="left:2.9px;top:0px;height:11.4px;line-height:11.4px;font-size:5.3px;font-weight:700;letter-spacing:-0.2px;color:#f8ece6;font-family:'Liberation Sans',sans-serif;">AI</div><div style="left:11.3px;top:0px;height:11.4px;line-height:11.4px;font-size:5.55px;color:#f2e2da;white-space:nowrap;">你是不是一直在</div></div>
<div style="left:212.4px;top:462.8px;width:60.1px;height:11.4px;background:#a9513c;border-radius:1.8px;overflow:hidden;"><div style="left:2.9px;top:0px;height:11.4px;line-height:11.4px;font-size:5.3px;font-weight:700;letter-spacing:-0.2px;color:#f8ece6;font-family:'Liberation Sans',sans-serif;">AI</div><div style="left:11.3px;top:0px;height:11.4px;line-height:11.4px;font-size:5.55px;color:#f2e2da;white-space:nowrap;">想说的话说不出来</div></div>
<div style="left:286.2px;top:462.8px;width:45.1px;height:11.4px;background:#a9513c;border-radius:1.8px;overflow:hidden;"><div style="left:2.9px;top:0px;height:11.4px;line-height:11.4px;font-size:5.3px;font-weight:700;letter-spacing:-0.2px;color:#f8ece6;font-family:'Liberation Sans',sans-serif;">AI</div><div style="left:11.3px;top:0px;height:11.4px;line-height:11.4px;font-size:5.55px;color:#f2e2da;white-space:nowrap;">别管你是企业主</div></div>
<div style="left:332.1px;top:462.8px;width:41.2px;height:11.4px;background:#a9513c;border-radius:1.8px;overflow:hidden;"><div style="left:2.9px;top:0px;height:11.4px;line-height:11.4px;font-size:5.3px;font-weight:700;letter-spacing:-0.2px;color:#f8ece6;font-family:'Liberation Sans',sans-serif;">AI</div><div style="left:11.3px;top:0px;height:11.4px;line-height:11.4px;font-size:5.55px;color:#f2e2da;white-space:nowrap;">还是自媒体新</div></div>
<div style="left:374.2px;top:462.8px;width:32.1px;height:11.4px;background:#a9513c;border-radius:1.8px;overflow:hidden;"><div style="left:2.9px;top:0px;height:11.4px;line-height:11.4px;font-size:5.3px;font-weight:700;letter-spacing:-0.2px;color:#f8ece6;font-family:'Liberation Sans',sans-serif;">AI</div><div style="left:11.3px;top:0px;height:11.4px;line-height:11.4px;font-size:5.55px;color:#f2e2da;white-space:nowrap;">今天这个</div></div>
<div style="left:407px;top:462.8px;width:30.6px;height:11.4px;background:#a9513c;border-radius:1.8px;overflow:hidden;"><div style="left:2.9px;top:0px;height:11.4px;line-height:11.4px;font-size:5.3px;font-weight:700;letter-spacing:-0.2px;color:#f8ece6;font-family:'Liberation Sans',sans-serif;">AI</div><div style="left:11.3px;top:0px;height:11.4px;line-height:11.4px;font-size:5.55px;color:#f2e2da;white-space:nowrap;">能让你彻</div></div>
<div style="left:498px;top:462.8px;width:53.3px;height:11.4px;background:#a9513c;border-radius:1.8px;overflow:hidden;"><div style="left:2.9px;top:0px;height:11.4px;line-height:11.4px;font-size:5.3px;font-weight:700;letter-spacing:-0.2px;color:#f8ece6;font-family:'Liberation Sans',sans-serif;">AI</div><div style="left:11.3px;top:0px;height:11.4px;line-height:11.4px;font-size:5.55px;color:#f2e2da;white-space:nowrap;">传递文章都能帮你</div></div>
<div style="left:552px;top:462.8px;width:32.5px;height:11.4px;background:#a9513c;border-radius:1.8px;overflow:hidden;"><div style="left:2.9px;top:0px;height:11.4px;line-height:11.4px;font-size:5.3px;font-weight:700;letter-spacing:-0.2px;color:#f8ece6;font-family:'Liberation Sans',sans-serif;">AI</div><div style="left:11.3px;top:0px;height:11.4px;line-height:11.4px;font-size:5.55px;color:#f2e2da;white-space:nowrap;">生成图制</div></div>
<div style="left:619.5px;top:462.8px;width:44.8px;height:11.4px;background:#a9513c;border-radius:1.8px;overflow:hidden;"><div style="left:2.9px;top:0px;height:11.4px;line-height:11.4px;font-size:5.3px;font-weight:700;letter-spacing:-0.2px;color:#f8ece6;font-family:'Liberation Sans',sans-serif;">AI</div><div style="left:11.3px;top:0px;height:11.4px;line-height:11.4px;font-size:5.55px;color:#f2e2da;white-space:nowrap;">的爆款视频了</div></div>
<div style="left:676.2px;top:462.8px;width:50.8px;height:11.4px;background:#a9513c;border-radius:1.8px;overflow:hidden;"><div style="left:2.9px;top:0px;height:11.4px;line-height:11.4px;font-size:5.3px;font-weight:700;letter-spacing:-0.2px;color:#f8ece6;font-family:'Liberation Sans',sans-serif;">AI</div><div style="left:11.3px;top:0px;height:11.4px;line-height:11.4px;font-size:5.55px;color:#f2e2da;white-space:nowrap;">从字幕到背景音乐</div></div>
<div style="left:728.2px;top:462.8px;width:42.6px;height:11.4px;background:#a9513c;border-radius:1.8px;overflow:hidden;"><div style="left:2.9px;top:0px;height:11.4px;line-height:11.4px;font-size:5.3px;font-weight:700;letter-spacing:-0.2px;color:#f8ece6;font-family:'Liberation Sans',sans-serif;">AI</div><div style="left:11.3px;top:0px;height:11.4px;line-height:11.4px;font-size:5.55px;color:#f2e2da;white-space:nowrap;">全部都一键搞</div></div>
<div style="left:805.5px;top:462.8px;width:9.7px;height:11.4px;background:#a9513c;border-radius:1.8px;overflow:hidden;"><div style="left:2.9px;top:0px;height:11.4px;line-height:11.4px;font-size:5.3px;font-weight:700;letter-spacing:-0.2px;color:#f8ece6;font-family:'Liberation Sans',sans-serif;">AI</div><div style="left:11.3px;top:0px;height:11.4px;line-height:11.4px;font-size:5.55px;color:#f2e2da;white-space:nowrap;"></div></div>
<div style="left:816px;top:462.8px;width:60.8px;height:11.4px;background:#a9513c;border-radius:1.8px;overflow:hidden;"><div style="left:2.9px;top:0px;height:11.4px;line-height:11.4px;font-size:5.3px;font-weight:700;letter-spacing:-0.2px;color:#f8ece6;font-family:'Liberation Sans',sans-serif;">AI</div><div style="left:11.3px;top:0px;height:11.4px;line-height:11.4px;font-size:5.55px;color:#f2e2da;white-space:nowrap;">配合独用你的声音合成</div></div>
<div style="left:882.2px;top:462.8px;width:37.6px;height:11.4px;background:#a9513c;border-radius:1.8px;overflow:hidden;"><div style="left:2.9px;top:0px;height:11.4px;line-height:11.4px;font-size:5.3px;font-weight:700;letter-spacing:-0.2px;color:#f8ece6;font-family:'Liberation Sans',sans-serif;">AI</div><div style="left:11.3px;top:0px;height:11.4px;line-height:11.4px;font-size:5.55px;color:#f2e2da;white-space:nowrap;">这样的智能</div></div>
<div style="left:921px;top:462.8px;width:44.5px;height:11.4px;background:#a9513c;border-radius:1.8px;overflow:hidden;"><div style="left:2.9px;top:0px;height:11.4px;line-height:11.4px;font-size:5.3px;font-weight:700;letter-spacing:-0.2px;color:#f8ece6;font-family:'Liberation Sans',sans-serif;">AI</div><div style="left:11.3px;top:0px;height:11.4px;line-height:11.4px;font-size:5.55px;color:#f2e2da;white-space:nowrap;">你难道不想试</div></div>
<div style="left:697px;top:476.6px;width:30px;height:11.2px;background:#a9513c;border-radius:1.8px;overflow:hidden;"><div style="left:3.6px;top:3.5px;width:4.4px;height:4.2px;border-top:0.8px solid #f4e6e0;border-bottom:0.8px solid #f4e6e0;"></div><div style="left:4.4px;top:5.2px;width:2.8px;height:0.8px;background:#f4e6e0;"></div><div style="left:10.8px;top:0px;height:11.2px;line-height:11.2px;font-size:5.55px;color:#f2e2da;white-space:nowrap;">背景音乐</div></div>
<div style="left:439.3px;top:490.2px;width:47px;height:11.4px;background:#a9513c;border-radius:1.8px;overflow:hidden;"><div style="left:3.6px;top:3.6px;width:4.4px;height:4.2px;border-top:0.8px solid #f4e6e0;border-bottom:0.8px solid #f4e6e0;"></div><div style="left:4.4px;top:5.3px;width:2.8px;height:0.8px;background:#f4e6e0;"></div><div style="left:10.8px;top:0px;height:11.4px;line-height:11.4px;font-size:5.55px;color:#f2e2da;white-space:nowrap;">别镜头恐惧</div></div>
<div style="left:509.3px;top:490.2px;width:42px;height:11.4px;background:#a9513c;border-radius:1.8px;overflow:hidden;"><div style="left:3.6px;top:3.6px;width:4.4px;height:4.2px;border-top:0.8px solid #f4e6e0;border-bottom:0.8px solid #f4e6e0;"></div><div style="left:4.4px;top:5.3px;width:2.8px;height:0.8px;background:#f4e6e0;"></div><div style="left:10.8px;top:0px;height:11.4px;line-height:11.4px;font-size:5.55px;color:#f2e2da;white-space:nowrap;">文案自动生成</div></div>
<div style="left:552px;top:490.2px;width:32.3px;height:11.4px;background:#a9513c;border-radius:1.8px;overflow:hidden;"><div style="left:3.6px;top:3.6px;width:4.4px;height:4.2px;border-top:0.8px solid #f4e6e0;border-bottom:0.8px solid #f4e6e0;"></div><div style="left:4.4px;top:5.3px;width:2.8px;height:0.8px;background:#f4e6e0;"></div><div style="left:10.8px;top:0px;height:11.4px;line-height:11.4px;font-size:5.55px;color:#f2e2da;white-space:nowrap;">事效点</div></div>
<div style="left:585.7px;top:490.2px;width:33.1px;height:11.4px;background:#a9513c;border-radius:1.8px;overflow:hidden;"><div style="left:3.6px;top:3.6px;width:4.4px;height:4.2px;border-top:0.8px solid #f4e6e0;border-bottom:0.8px solid #f4e6e0;"></div><div style="left:4.4px;top:5.3px;width:2.8px;height:0.8px;background:#f4e6e0;"></div><div style="left:10.8px;top:0px;height:11.4px;line-height:11.4px;font-size:5.55px;color:#f2e2da;white-space:nowrap;">直接复制</div></div>
<div style="left:620px;top:490.2px;width:44.3px;height:11.4px;background:#a9513c;border-radius:1.8px;overflow:hidden;"><div style="left:3.6px;top:3.6px;width:4.4px;height:4.2px;border-top:0.8px solid #f4e6e0;border-bottom:0.8px solid #f4e6e0;"></div><div style="left:4.4px;top:5.3px;width:2.8px;height:0.8px;background:#f4e6e0;"></div><div style="left:10.8px;top:0px;height:11.4px;line-height:11.4px;font-size:5.55px;color:#f2e2da;white-space:nowrap;">爆款视频</div></div>
<div style="left:676.2px;top:490.2px;width:50.8px;height:11.4px;background:#a9513c;border-radius:1.8px;overflow:hidden;"><div style="left:3.6px;top:3.6px;width:4.4px;height:4.2px;border-top:0.8px solid #f4e6e0;border-bottom:0.8px solid #f4e6e0;"></div><div style="left:4.4px;top:5.3px;width:2.8px;height:0.8px;background:#f4e6e0;"></div><div style="left:10.8px;top:0px;height:11.4px;line-height:11.4px;font-size:5.55px;color:#f2e2da;white-space:nowrap;">字幕</div></div>
<div style="left:728.2px;top:490.2px;width:41.8px;height:11.4px;background:#a9513c;border-radius:1.8px;overflow:hidden;"><div style="left:3.6px;top:3.6px;width:4.4px;height:4.2px;border-top:0.8px solid #f4e6e0;border-bottom:0.8px solid #f4e6e0;"></div><div style="left:4.4px;top:5.3px;width:2.8px;height:0.8px;background:#f4e6e0;"></div><div style="left:10.8px;top:0px;height:11.4px;line-height:11.4px;font-size:5.55px;color:#f2e2da;white-space:nowrap;">一键搞定</div></div>
<div style="left:771.7px;top:490.2px;width:33.3px;height:11.4px;background:#a9513c;border-radius:1.8px;overflow:hidden;"><div style="left:3.6px;top:3.6px;width:4.4px;height:4.2px;border-top:0.8px solid #f4e6e0;border-bottom:0.8px solid #f4e6e0;"></div><div style="left:4.4px;top:5.3px;width:2.8px;height:0.8px;background:#f4e6e0;"></div><div style="left:10.8px;top:0px;height:11.4px;line-height:11.4px;font-size:5.55px;color:#f2e2da;white-space:nowrap;">数字人形</div></div>
<div style="left:815.5px;top:490.2px;width:61.3px;height:11.4px;background:#a9513c;border-radius:1.8px;overflow:hidden;"><div style="left:3.6px;top:3.6px;width:4.4px;height:4.2px;border-top:0.8px solid #f4e6e0;border-bottom:0.8px solid #f4e6e0;"></div><div style="left:4.4px;top:5.3px;width:2.8px;height:0.8px;background:#f4e6e0;"></div><div style="left:10.8px;top:0px;height:11.4px;line-height:11.4px;font-size:5.55px;color:#f2e2da;white-space:nowrap;">声音合成</div></div>
<div style="left:882.2px;top:490.2px;width:37.6px;height:11.4px;background:#a9513c;border-radius:1.8px;overflow:hidden;"><div style="left:3.6px;top:3.6px;width:4.4px;height:4.2px;border-top:0.8px solid #f4e6e0;border-bottom:0.8px solid #f4e6e0;"></div><div style="left:4.4px;top:5.3px;width:2.8px;height:0.8px;background:#f4e6e0;"></div><div style="left:10.8px;top:0px;height:11.4px;line-height:11.4px;font-size:5.55px;color:#f2e2da;white-space:nowrap;">智能助手</div></div>
<div style="left:405.4px;top:489.8px;width:33.4px;height:12.2px;background:#a9513c;border-radius:1.8px;overflow:hidden;border:0.9px solid #fff;"><div style="left:2.7px;top:3.1px;width:4.4px;height:4.2px;border-top:0.8px solid #f4e6e0;border-bottom:0.8px solid #f4e6e0;"></div><div style="left:3.5px;top:4.8px;width:2.8px;height:0.8px;background:#f4e6e0;"></div><div style="left:9.9px;top:-0.9px;height:12.2px;line-height:12.2px;font-size:5.55px;color:#f2e2da;white-space:nowrap;">彻底告别</div></div>
<div style="left:407.3px;top:502px;width:0.5px;height:15px;background:#7a2a2a;"></div>
<div style="left:165.8px;top:503.6px;width:46px;height:11.4px;background:#784c87;border-radius:1.8px;"></div>
<svg style="left:168.6px;top:506.4px;" width="6" height="6" viewBox="0 0 6 6"><path d="M3 0.4 L3.7 1.7 L5.2 1.4 L4.7 2.8 L5.6 4 L4.2 4 L3.7 5.4 L2.7 4.4 L1.3 4.7 L1.7 3.3 L0.7 2.3 L2.2 2 Z" fill="none" stroke="#eee" stroke-width="0.7"/></svg>
<div style="left:176.6px;top:506px;width:0.5px;height:6.6px;background:#9a78a6;"></div>
<div style="left:154.8px;top:517.2px;width:810.7px;height:38.2px;background:#04555a;border-radius:1.6px;"></div>
<svg style="left:156.6px;top:518.8px;" width="6" height="6" viewBox="0 0 6 6"><rect x="0.4" y="0.4" width="5.2" height="5.2" rx="0.6" fill="none" stroke="#e8f4f4" stroke-width="0.7"/><path d="M1.6 4.6 L1.6 2.6 M3 4.6 L3 1.6 L4.4 1.6" stroke="#e8f4f4" stroke-width="0.7" fill="none"/></svg>
<div style="top:517.6px;height:8.8px;line-height:8.8px;font-size:5.4px;color:#e8f4f4;white-space:nowrap;left:166px;">复合片段1</div>
<div style="top:517.6px;height:8.8px;line-height:8.8px;font-size:5.4px;color:#cfe6e8;white-space:nowrap;left:194.3px;">00:00:24:15</div>
<svg style="left:154.8px;top:526.3px;" width="810.7" height="20.6" viewBox="0 0 810.7 20.6"><defs><clipPath id="tc"><rect width="810.7" height="20.6"/></clipPath></defs><g clip-path="url(#tc)"><g transform="translate(0.0 0)"><rect width="26.1" height="20.6" fill="#151c3c"/><rect x="0" y="0" width="7.4" height="20.6" fill="#a59c84"/><path d="M0 3 L6 8 L2 10 L7 15 L1 16 Z" fill="#5a6038"/><rect x="0" y="13" width="6" height="7.6" fill="#6e6038"/><rect x="16" y="9" width="10.1" height="11.6" fill="#6a5540"/><rect x="17" y="1" width="8" height="7" fill="#1d3470" opacity="0.7"/><rect x="20" y="11" width="5" height="6" fill="#b89468"/><path d="M2.6 20.6 L3.6 14.6 C4.6 12.6 8 12 10 11.4 L15 11.4 C18 12 21.4 12.6 22.2 14.8 L23 20.6 Z" fill="#55524c"/><path d="M10.6 11.4 L14.8 11.4 L14.2 20.6 L11.2 20.6 Z" fill="#b4c2d0"/><ellipse cx="12.6" cy="5.6" rx="5.2" ry="5.3" fill="#2a1a14"/><ellipse cx="12.6" cy="7.4" rx="2.8" ry="3.7" fill="#dcb6a2"/><rect x="11.7" y="9.1" width="1.8" height="0.8" fill="#c03a40"/></g><g transform="translate(26.1 0)"><rect width="26.1" height="20.6" fill="#151c3c"/><rect x="0" y="0" width="7.4" height="20.6" fill="#a59c84"/><path d="M0 3 L6 8 L2 10 L7 15 L1 16 Z" fill="#5a6038"/><rect x="0" y="13" width="6" height="7.6" fill="#6e6038"/><rect x="16" y="9" width="10.1" height="11.6" fill="#6a5540"/><rect x="17" y="1" width="8" height="7" fill="#1d3470" opacity="0.7"/><rect x="20" y="11" width="5" height="6" fill="#b89468"/><path d="M2.6 20.6 L3.6 14.6 C4.6 12.6 8 12 10 11.4 L15 11.4 C18 12 21.4 12.6 22.2 14.8 L23 20.6 Z" fill="#55524c"/><path d="M10.6 11.4 L14.8 11.4 L14.2 20.6 L11.2 20.6 Z" fill="#b4c2d0"/><ellipse cx="12.6" cy="5.6" rx="5.2" ry="5.3" fill="#2a1a14"/><ellipse cx="12.6" cy="7.4" rx="2.8" ry="3.7" fill="#dcb6a2"/><rect x="11.7" y="9.1" width="1.8" height="0.8" fill="#c03a40"/></g><g transform="translate(52.2 0)"><rect width="26.1" height="20.6" fill="#151c3c"/><rect x="0" y="0" width="7.4" height="20.6" fill="#a59c84"/><path d="M0 3 L6 8 L2 10 L7 15 L1 16 Z" fill="#5a6038"/><rect x="0" y="13" width="6" height="7.6" fill="#6e6038"/><rect x="16" y="9" width="10.1" height="11.6" fill="#6a5540"/><rect x="17" y="1" width="8" height="7" fill="#1d3470" opacity="0.7"/><rect x="20" y="11" width="5" height="6" fill="#b89468"/><path d="M2.6 20.6 L3.6 14.6 C4.6 12.6 8 12 10 11.4 L15 11.4 C18 12 21.4 12.6 22.2 14.8 L23 20.6 Z" fill="#55524c"/><path d="M10.6 11.4 L14.8 11.4 L14.2 20.6 L11.2 20.6 Z" fill="#b4c2d0"/><ellipse cx="12.6" cy="5.6" rx="5.2" ry="5.3" fill="#2a1a14"/><ellipse cx="12.6" cy="7.4" rx="2.8" ry="3.7" fill="#dcb6a2"/><rect x="11.7" y="9.1" width="1.8" height="0.8" fill="#c03a40"/></g><g transform="translate(78.3 0)"><rect width="26.1" height="20.6" fill="#151c3c"/><rect x="0" y="0" width="7.4" height="20.6" fill="#a59c84"/><path d="M0 3 L6 8 L2 10 L7 15 L1 16 Z" fill="#5a6038"/><rect x="0" y="13" width="6" height="7.6" fill="#6e6038"/><rect x="16" y="9" width="10.1" height="11.6" fill="#6a5540"/><rect x="17" y="1" width="8" height="7" fill="#1d3470" opacity="0.7"/><rect x="20" y="11" width="5" height="6" fill="#b89468"/><path d="M2.6 20.6 L3.6 14.6 C4.6 12.6 8 12 10 11.4 L15 11.4 C18 12 21.4 12.6 22.2 14.8 L23 20.6 Z" fill="#55524c"/><path d="M10.6 11.4 L14.8 11.4 L14.2 20.6 L11.2 20.6 Z" fill="#b4c2d0"/><ellipse cx="12.6" cy="5.6" rx="5.2" ry="5.3" fill="#2a1a14"/><ellipse cx="12.6" cy="7.4" rx="2.8" ry="3.7" fill="#dcb6a2"/><rect x="11.7" y="9.1" width="1.8" height="0.8" fill="#c03a40"/></g><g transform="translate(104.4 0)"><rect width="26.1" height="20.6" fill="#151c3c"/><rect x="0" y="0" width="7.4" height="20.6" fill="#a59c84"/><path d="M0 3 L6 8 L2 10 L7 15 L1 16 Z" fill="#5a6038"/><rect x="0" y="13" width="6" height="7.6" fill="#6e6038"/><rect x="16" y="9" width="10.1" height="11.6" fill="#6a5540"/><rect x="17" y="1" width="8" height="7" fill="#1d3470" opacity="0.7"/><rect x="20" y="11" width="5" height="6" fill="#b89468"/><path d="M2.6 20.6 L3.6 14.6 C4.6 12.6 8 12 10 11.4 L15 11.4 C18 12 21.4 12.6 22.2 14.8 L23 20.6 Z" fill="#55524c"/><path d="M10.6 11.4 L14.8 11.4 L14.2 20.6 L11.2 20.6 Z" fill="#b4c2d0"/><ellipse cx="12.6" cy="5.6" rx="5.2" ry="5.3" fill="#2a1a14"/><ellipse cx="12.6" cy="7.4" rx="2.8" ry="3.7" fill="#dcb6a2"/><rect x="11.7" y="9.1" width="1.8" height="0.8" fill="#c03a40"/></g><g transform="translate(130.5 0)"><rect width="26.1" height="20.6" fill="#151c3c"/><rect x="0" y="0" width="7.4" height="20.6" fill="#a59c84"/><path d="M0 3 L6 8 L2 10 L7 15 L1 16 Z" fill="#5a6038"/><rect x="0" y="13" width="6" height="7.6" fill="#6e6038"/><rect x="16" y="9" width="10.1" height="11.6" fill="#6a5540"/><rect x="17" y="1" width="8" height="7" fill="#1d3470" opacity="0.7"/><rect x="20" y="11" width="5" height="6" fill="#b89468"/><path d="M2.6 20.6 L3.6 14.6 C4.6 12.6 8 12 10 11.4 L15 11.4 C18 12 21.4 12.6 22.2 14.8 L23 20.6 Z" fill="#55524c"/><path d="M10.6 11.4 L14.8 11.4 L14.2 20.6 L11.2 20.6 Z" fill="#b4c2d0"/><ellipse cx="12.6" cy="5.6" rx="5.2" ry="5.3" fill="#2a1a14"/><ellipse cx="12.6" cy="7.4" rx="2.8" ry="3.7" fill="#dcb6a2"/><rect x="11.7" y="9.1" width="1.8" height="0.8" fill="#c03a40"/></g><g transform="translate(156.6 0)"><rect width="26.1" height="20.6" fill="#151c3c"/><rect x="0" y="0" width="7.4" height="20.6" fill="#a59c84"/><path d="M0 3 L6 8 L2 10 L7 15 L1 16 Z" fill="#5a6038"/><rect x="0" y="13" width="6" height="7.6" fill="#6e6038"/><rect x="16" y="9" width="10.1" height="11.6" fill="#6a5540"/><rect x="17" y="1" width="8" height="7" fill="#1d3470" opacity="0.7"/><rect x="20" y="11" width="5" height="6" fill="#b89468"/><path d="M2.6 20.6 L3.6 14.6 C4.6 12.6 8 12 10 11.4 L15 11.4 C18 12 21.4 12.6 22.2 14.8 L23 20.6 Z" fill="#55524c"/><path d="M10.6 11.4 L14.8 11.4 L14.2 20.6 L11.2 20.6 Z" fill="#b4c2d0"/><ellipse cx="12.6" cy="5.6" rx="5.2" ry="5.3" fill="#2a1a14"/><ellipse cx="12.6" cy="7.4" rx="2.8" ry="3.7" fill="#dcb6a2"/><rect x="11.7" y="9.1" width="1.8" height="0.8" fill="#c03a40"/></g><g transform="translate(182.7 0)"><rect width="26.1" height="20.6" fill="#151c3c"/><rect x="0" y="0" width="7.4" height="20.6" fill="#a59c84"/><path d="M0 3 L6 8 L2 10 L7 15 L1 16 Z" fill="#5a6038"/><rect x="0" y="13" width="6" height="7.6" fill="#6e6038"/><rect x="16" y="9" width="10.1" height="11.6" fill="#6a5540"/><rect x="17" y="1" width="8" height="7" fill="#1d3470" opacity="0.7"/><rect x="20" y="11" width="5" height="6" fill="#b89468"/><path d="M2.6 20.6 L3.6 14.6 C4.6 12.6 8 12 10 11.4 L15 11.4 C18 12 21.4 12.6 22.2 14.8 L23 20.6 Z" fill="#55524c"/><path d="M10.6 11.4 L14.8 11.4 L14.2 20.6 L11.2 20.6 Z" fill="#b4c2d0"/><ellipse cx="12.6" cy="5.6" rx="5.2" ry="5.3" fill="#2a1a14"/><ellipse cx="12.6" cy="7.4" rx="2.8" ry="3.7" fill="#dcb6a2"/><rect x="11.7" y="9.1" width="1.8" height="0.8" fill="#c03a40"/></g><g transform="translate(208.8 0)"><rect width="26.1" height="20.6" fill="#151c3c"/><rect x="0" y="0" width="7.4" height="20.6" fill="#a59c84"/><path d="M0 3 L6 8 L2 10 L7 15 L1 16 Z" fill="#5a6038"/><rect x="0" y="13" width="6" height="7.6" fill="#6e6038"/><rect x="16" y="9" width="10.1" height="11.6" fill="#6a5540"/><rect x="17" y="1" width="8" height="7" fill="#1d3470" opacity="0.7"/><rect x="20" y="11" width="5" height="6" fill="#b89468"/><path d="M2.6 20.6 L3.6 14.6 C4.6 12.6 8 12 10 11.4 L15 11.4 C18 12 21.4 12.6 22.2 14.8 L23 20.6 Z" fill="#55524c"/><path d="M10.6 11.4 L14.8 11.4 L14.2 20.6 L11.2 20.6 Z" fill="#b4c2d0"/><ellipse cx="12.6" cy="5.6" rx="5.2" ry="5.3" fill="#2a1a14"/><ellipse cx="12.6" cy="7.4" rx="2.8" ry="3.7" fill="#dcb6a2"/><rect x="11.7" y="9.1" width="1.8" height="0.8" fill="#c03a40"/></g><g transform="translate(234.9 0)"><rect width="26.1" height="20.6" fill="#151c3c"/><rect x="0" y="0" width="7.4" height="20.6" fill="#a59c84"/><path d="M0 3 L6 8 L2 10 L7 15 L1 16 Z" fill="#5a6038"/><rect x="0" y="13" width="6" height="7.6" fill="#6e6038"/><rect x="16" y="9" width="10.1" height="11.6" fill="#6a5540"/><rect x="17" y="1" width="8" height="7" fill="#1d3470" opacity="0.7"/><rect x="20" y="11" width="5" height="6" fill="#b89468"/><path d="M2.6 20.6 L3.6 14.6 C4.6 12.6 8 12 10 11.4 L15 11.4 C18 12 21.4 12.6 22.2 14.8 L23 20.6 Z" fill="#55524c"/><path d="M10.6 11.4 L14.8 11.4 L14.2 20.6 L11.2 20.6 Z" fill="#b4c2d0"/><ellipse cx="12.6" cy="5.6" rx="5.2" ry="5.3" fill="#2a1a14"/><ellipse cx="12.6" cy="7.4" rx="2.8" ry="3.7" fill="#dcb6a2"/><rect x="11.7" y="9.1" width="1.8" height="0.8" fill="#c03a40"/></g><g transform="translate(261.0 0)"><rect width="26.1" height="20.6" fill="#151c3c"/><rect x="0" y="0" width="7.4" height="20.6" fill="#a59c84"/><path d="M0 3 L6 8 L2 10 L7 15 L1 16 Z" fill="#5a6038"/><rect x="0" y="13" width="6" height="7.6" fill="#6e6038"/><rect x="16" y="9" width="10.1" height="11.6" fill="#6a5540"/><rect x="17" y="1" width="8" height="7" fill="#1d3470" opacity="0.7"/><rect x="20" y="11" width="5" height="6" fill="#b89468"/><path d="M2.6 20.6 L3.6 14.6 C4.6 12.6 8 12 10 11.4 L15 11.4 C18 12 21.4 12.6 22.2 14.8 L23 20.6 Z" fill="#55524c"/><path d="M10.6 11.4 L14.8 11.4 L14.2 20.6 L11.2 20.6 Z" fill="#b4c2d0"/><ellipse cx="12.6" cy="5.6" rx="5.2" ry="5.3" fill="#2a1a14"/><ellipse cx="12.6" cy="7.4" rx="2.8" ry="3.7" fill="#dcb6a2"/><rect x="11.7" y="9.1" width="1.8" height="0.8" fill="#c03a40"/></g><g transform="translate(287.1 0)"><rect width="26.1" height="20.6" fill="#151c3c"/><rect x="0" y="0" width="7.4" height="20.6" fill="#a59c84"/><path d="M0 3 L6 8 L2 10 L7 15 L1 16 Z" fill="#5a6038"/><rect x="0" y="13" width="6" height="7.6" fill="#6e6038"/><rect x="16" y="9" width="10.1" height="11.6" fill="#6a5540"/><rect x="17" y="1" width="8" height="7" fill="#1d3470" opacity="0.7"/><rect x="20" y="11" width="5" height="6" fill="#b89468"/><path d="M2.6 20.6 L3.6 14.6 C4.6 12.6 8 12 10 11.4 L15 11.4 C18 12 21.4 12.6 22.2 14.8 L23 20.6 Z" fill="#55524c"/><path d="M10.6 11.4 L14.8 11.4 L14.2 20.6 L11.2 20.6 Z" fill="#b4c2d0"/><ellipse cx="12.6" cy="5.6" rx="5.2" ry="5.3" fill="#2a1a14"/><ellipse cx="12.6" cy="7.4" rx="2.8" ry="3.7" fill="#dcb6a2"/><rect x="11.7" y="9.1" width="1.8" height="0.8" fill="#c03a40"/></g><g transform="translate(313.2 0)"><rect width="26.1" height="20.6" fill="#151c3c"/><rect x="0" y="0" width="7.4" height="20.6" fill="#a59c84"/><path d="M0 3 L6 8 L2 10 L7 15 L1 16 Z" fill="#5a6038"/><rect x="0" y="13" width="6" height="7.6" fill="#6e6038"/><rect x="16" y="9" width="10.1" height="11.6" fill="#6a5540"/><rect x="17" y="1" width="8" height="7" fill="#1d3470" opacity="0.7"/><rect x="20" y="11" width="5" height="6" fill="#b89468"/><path d="M2.6 20.6 L3.6 14.6 C4.6 12.6 8 12 10 11.4 L15 11.4 C18 12 21.4 12.6 22.2 14.8 L23 20.6 Z" fill="#55524c"/><path d="M10.6 11.4 L14.8 11.4 L14.2 20.6 L11.2 20.6 Z" fill="#b4c2d0"/><ellipse cx="12.6" cy="5.6" rx="5.2" ry="5.3" fill="#2a1a14"/><ellipse cx="12.6" cy="7.4" rx="2.8" ry="3.7" fill="#dcb6a2"/><rect x="11.7" y="9.1" width="1.8" height="0.8" fill="#c03a40"/></g><g transform="translate(339.3 0)"><rect width="26.1" height="20.6" fill="#151c3c"/><rect x="0" y="0" width="7.4" height="20.6" fill="#a59c84"/><path d="M0 3 L6 8 L2 10 L7 15 L1 16 Z" fill="#5a6038"/><rect x="0" y="13" width="6" height="7.6" fill="#6e6038"/><rect x="16" y="9" width="10.1" height="11.6" fill="#6a5540"/><rect x="17" y="1" width="8" height="7" fill="#1d3470" opacity="0.7"/><rect x="20" y="11" width="5" height="6" fill="#b89468"/><path d="M2.6 20.6 L3.6 14.6 C4.6 12.6 8 12 10 11.4 L15 11.4 C18 12 21.4 12.6 22.2 14.8 L23 20.6 Z" fill="#55524c"/><path d="M10.6 11.4 L14.8 11.4 L14.2 20.6 L11.2 20.6 Z" fill="#b4c2d0"/><ellipse cx="12.6" cy="5.6" rx="5.2" ry="5.3" fill="#2a1a14"/><ellipse cx="12.6" cy="7.4" rx="2.8" ry="3.7" fill="#dcb6a2"/><rect x="11.7" y="9.1" width="1.8" height="0.8" fill="#c03a40"/></g><g transform="translate(365.4 0)"><rect width="26.1" height="20.6" fill="#151c3c"/><rect x="0" y="0" width="7.4" height="20.6" fill="#a59c84"/><path d="M0 3 L6 8 L2 10 L7 15 L1 16 Z" fill="#5a6038"/><rect x="0" y="13" width="6" height="7.6" fill="#6e6038"/><rect x="16" y="9" width="10.1" height="11.6" fill="#6a5540"/><rect x="17" y="1" width="8" height="7" fill="#1d3470" opacity="0.7"/><rect x="20" y="11" width="5" height="6" fill="#b89468"/><path d="M2.6 20.6 L3.6 14.6 C4.6 12.6 8 12 10 11.4 L15 11.4 C18 12 21.4 12.6 22.2 14.8 L23 20.6 Z" fill="#55524c"/><path d="M10.6 11.4 L14.8 11.4 L14.2 20.6 L11.2 20.6 Z" fill="#b4c2d0"/><ellipse cx="12.6" cy="5.6" rx="5.2" ry="5.3" fill="#2a1a14"/><ellipse cx="12.6" cy="7.4" rx="2.8" ry="3.7" fill="#dcb6a2"/><rect x="11.7" y="9.1" width="1.8" height="0.8" fill="#c03a40"/></g><g transform="translate(391.5 0)"><rect width="26.1" height="20.6" fill="#151c3c"/><rect x="0" y="0" width="7.4" height="20.6" fill="#a59c84"/><path d="M0 3 L6 8 L2 10 L7 15 L1 16 Z" fill="#5a6038"/><rect x="0" y="13" width="6" height="7.6" fill="#6e6038"/><rect x="16" y="9" width="10.1" height="11.6" fill="#6a5540"/><rect x="17" y="1" width="8" height="7" fill="#1d3470" opacity="0.7"/><rect x="20" y="11" width="5" height="6" fill="#b89468"/><path d="M2.6 20.6 L3.6 14.6 C4.6 12.6 8 12 10 11.4 L15 11.4 C18 12 21.4 12.6 22.2 14.8 L23 20.6 Z" fill="#55524c"/><path d="M10.6 11.4 L14.8 11.4 L14.2 20.6 L11.2 20.6 Z" fill="#b4c2d0"/><ellipse cx="12.6" cy="5.6" rx="5.2" ry="5.3" fill="#2a1a14"/><ellipse cx="12.6" cy="7.4" rx="2.8" ry="3.7" fill="#dcb6a2"/><rect x="11.7" y="9.1" width="1.8" height="0.8" fill="#c03a40"/></g><g transform="translate(417.6 0)"><rect width="26.1" height="20.6" fill="#151c3c"/><rect x="0" y="0" width="7.4" height="20.6" fill="#a59c84"/><path d="M0 3 L6 8 L2 10 L7 15 L1 16 Z" fill="#5a6038"/><rect x="0" y="13" width="6" height="7.6" fill="#6e6038"/><rect x="16" y="9" width="10.1" height="11.6" fill="#6a5540"/><rect x="17" y="1" width="8" height="7" fill="#1d3470" opacity="0.7"/><rect x="20" y="11" width="5" height="6" fill="#b89468"/><path d="M2.6 20.6 L3.6 14.6 C4.6 12.6 8 12 10 11.4 L15 11.4 C18 12 21.4 12.6 22.2 14.8 L23 20.6 Z" fill="#55524c"/><path d="M10.6 11.4 L14.8 11.4 L14.2 20.6 L11.2 20.6 Z" fill="#b4c2d0"/><ellipse cx="12.6" cy="5.6" rx="5.2" ry="5.3" fill="#2a1a14"/><ellipse cx="12.6" cy="7.4" rx="2.8" ry="3.7" fill="#dcb6a2"/><rect x="11.7" y="9.1" width="1.8" height="0.8" fill="#c03a40"/></g><g transform="translate(443.7 0)"><rect width="26.1" height="20.6" fill="#151c3c"/><rect x="0" y="0" width="7.4" height="20.6" fill="#a59c84"/><path d="M0 3 L6 8 L2 10 L7 15 L1 16 Z" fill="#5a6038"/><rect x="0" y="13" width="6" height="7.6" fill="#6e6038"/><rect x="16" y="9" width="10.1" height="11.6" fill="#6a5540"/><rect x="17" y="1" width="8" height="7" fill="#1d3470" opacity="0.7"/><rect x="20" y="11" width="5" height="6" fill="#b89468"/><path d="M2.6 20.6 L3.6 14.6 C4.6 12.6 8 12 10 11.4 L15 11.4 C18 12 21.4 12.6 22.2 14.8 L23 20.6 Z" fill="#55524c"/><path d="M10.6 11.4 L14.8 11.4 L14.2 20.6 L11.2 20.6 Z" fill="#b4c2d0"/><ellipse cx="12.6" cy="5.6" rx="5.2" ry="5.3" fill="#2a1a14"/><ellipse cx="12.6" cy="7.4" rx="2.8" ry="3.7" fill="#dcb6a2"/><rect x="11.7" y="9.1" width="1.8" height="0.8" fill="#c03a40"/></g><g transform="translate(469.8 0)"><rect width="26.1" height="20.6" fill="#151c3c"/><rect x="0" y="0" width="7.4" height="20.6" fill="#a59c84"/><path d="M0 3 L6 8 L2 10 L7 15 L1 16 Z" fill="#5a6038"/><rect x="0" y="13" width="6" height="7.6" fill="#6e6038"/><rect x="16" y="9" width="10.1" height="11.6" fill="#6a5540"/><rect x="17" y="1" width="8" height="7" fill="#1d3470" opacity="0.7"/><rect x="20" y="11" width="5" height="6" fill="#b89468"/><path d="M2.6 20.6 L3.6 14.6 C4.6 12.6 8 12 10 11.4 L15 11.4 C18 12 21.4 12.6 22.2 14.8 L23 20.6 Z" fill="#55524c"/><path d="M10.6 11.4 L14.8 11.4 L14.2 20.6 L11.2 20.6 Z" fill="#b4c2d0"/><ellipse cx="12.6" cy="5.6" rx="5.2" ry="5.3" fill="#2a1a14"/><ellipse cx="12.6" cy="7.4" rx="2.8" ry="3.7" fill="#dcb6a2"/><rect x="11.7" y="9.1" width="1.8" height="0.8" fill="#c03a40"/></g><g transform="translate(495.9 0)"><rect width="26.1" height="20.6" fill="#151c3c"/><rect x="0" y="0" width="7.4" height="20.6" fill="#a59c84"/><path d="M0 3 L6 8 L2 10 L7 15 L1 16 Z" fill="#5a6038"/><rect x="0" y="13" width="6" height="7.6" fill="#6e6038"/><rect x="16" y="9" width="10.1" height="11.6" fill="#6a5540"/><rect x="17" y="1" width="8" height="7" fill="#1d3470" opacity="0.7"/><rect x="20" y="11" width="5" height="6" fill="#b89468"/><path d="M2.6 20.6 L3.6 14.6 C4.6 12.6 8 12 10 11.4 L15 11.4 C18 12 21.4 12.6 22.2 14.8 L23 20.6 Z" fill="#55524c"/><path d="M10.6 11.4 L14.8 11.4 L14.2 20.6 L11.2 20.6 Z" fill="#b4c2d0"/><ellipse cx="12.6" cy="5.6" rx="5.2" ry="5.3" fill="#2a1a14"/><ellipse cx="12.6" cy="7.4" rx="2.8" ry="3.7" fill="#dcb6a2"/><rect x="11.7" y="9.1" width="1.8" height="0.8" fill="#c03a40"/></g><g transform="translate(522.0 0)"><rect width="26.1" height="20.6" fill="#151c3c"/><rect x="0" y="0" width="7.4" height="20.6" fill="#a59c84"/><path d="M0 3 L6 8 L2 10 L7 15 L1 16 Z" fill="#5a6038"/><rect x="0" y="13" width="6" height="7.6" fill="#6e6038"/><rect x="16" y="9" width="10.1" height="11.6" fill="#6a5540"/><rect x="17" y="1" width="8" height="7" fill="#1d3470" opacity="0.7"/><rect x="20" y="11" width="5" height="6" fill="#b89468"/><path d="M2.6 20.6 L3.6 14.6 C4.6 12.6 8 12 10 11.4 L15 11.4 C18 12 21.4 12.6 22.2 14.8 L23 20.6 Z" fill="#55524c"/><path d="M10.6 11.4 L14.8 11.4 L14.2 20.6 L11.2 20.6 Z" fill="#b4c2d0"/><ellipse cx="12.6" cy="5.6" rx="5.2" ry="5.3" fill="#2a1a14"/><ellipse cx="12.6" cy="7.4" rx="2.8" ry="3.7" fill="#dcb6a2"/><rect x="11.7" y="9.1" width="1.8" height="0.8" fill="#c03a40"/></g><g transform="translate(548.1 0)"><rect width="26.1" height="20.6" fill="#151c3c"/><rect x="0" y="0" width="7.4" height="20.6" fill="#a59c84"/><path d="M0 3 L6 8 L2 10 L7 15 L1 16 Z" fill="#5a6038"/><rect x="0" y="13" width="6" height="7.6" fill="#6e6038"/><rect x="16" y="9" width="10.1" height="11.6" fill="#6a5540"/><rect x="17" y="1" width="8" height="7" fill="#1d3470" opacity="0.7"/><rect x="20" y="11" width="5" height="6" fill="#b89468"/><path d="M2.6 20.6 L3.6 14.6 C4.6 12.6 8 12 10 11.4 L15 11.4 C18 12 21.4 12.6 22.2 14.8 L23 20.6 Z" fill="#55524c"/><path d="M10.6 11.4 L14.8 11.4 L14.2 20.6 L11.2 20.6 Z" fill="#b4c2d0"/><ellipse cx="12.6" cy="5.6" rx="5.2" ry="5.3" fill="#2a1a14"/><ellipse cx="12.6" cy="7.4" rx="2.8" ry="3.7" fill="#dcb6a2"/><rect x="11.7" y="9.1" width="1.8" height="0.8" fill="#c03a40"/></g><g transform="translate(574.2 0)"><rect width="26.1" height="20.6" fill="#151c3c"/><rect x="0" y="0" width="7.4" height="20.6" fill="#a59c84"/><path d="M0 3 L6 8 L2 10 L7 15 L1 16 Z" fill="#5a6038"/><rect x="0" y="13" width="6" height="7.6" fill="#6e6038"/><rect x="16" y="9" width="10.1" height="11.6" fill="#6a5540"/><rect x="17" y="1" width="8" height="7" fill="#1d3470" opacity="0.7"/><rect x="20" y="11" width="5" height="6" fill="#b89468"/><path d="M2.6 20.6 L3.6 14.6 C4.6 12.6 8 12 10 11.4 L15 11.4 C18 12 21.4 12.6 22.2 14.8 L23 20.6 Z" fill="#55524c"/><path d="M10.6 11.4 L14.8 11.4 L14.2 20.6 L11.2 20.6 Z" fill="#b4c2d0"/><ellipse cx="12.6" cy="5.6" rx="5.2" ry="5.3" fill="#2a1a14"/><ellipse cx="12.6" cy="7.4" rx="2.8" ry="3.7" fill="#dcb6a2"/><rect x="11.7" y="9.1" width="1.8" height="0.8" fill="#c03a40"/></g><g transform="translate(600.3 0)"><rect width="26.1" height="20.6" fill="#151c3c"/><rect x="0" y="0" width="7.4" height="20.6" fill="#a59c84"/><path d="M0 3 L6 8 L2 10 L7 15 L1 16 Z" fill="#5a6038"/><rect x="0" y="13" width="6" height="7.6" fill="#6e6038"/><rect x="16" y="9" width="10.1" height="11.6" fill="#6a5540"/><rect x="17" y="1" width="8" height="7" fill="#1d3470" opacity="0.7"/><rect x="20" y="11" width="5" height="6" fill="#b89468"/><path d="M2.6 20.6 L3.6 14.6 C4.6 12.6 8 12 10 11.4 L15 11.4 C18 12 21.4 12.6 22.2 14.8 L23 20.6 Z" fill="#55524c"/><path d="M10.6 11.4 L14.8 11.4 L14.2 20.6 L11.2 20.6 Z" fill="#b4c2d0"/><ellipse cx="12.6" cy="5.6" rx="5.2" ry="5.3" fill="#2a1a14"/><ellipse cx="12.6" cy="7.4" rx="2.8" ry="3.7" fill="#dcb6a2"/><rect x="11.7" y="9.1" width="1.8" height="0.8" fill="#c03a40"/></g><g transform="translate(626.4 0)"><rect width="26.1" height="20.6" fill="#151c3c"/><rect x="0" y="0" width="7.4" height="20.6" fill="#a59c84"/><path d="M0 3 L6 8 L2 10 L7 15 L1 16 Z" fill="#5a6038"/><rect x="0" y="13" width="6" height="7.6" fill="#6e6038"/><rect x="16" y="9" width="10.1" height="11.6" fill="#6a5540"/><rect x="17" y="1" width="8" height="7" fill="#1d3470" opacity="0.7"/><rect x="20" y="11" width="5" height="6" fill="#b89468"/><path d="M2.6 20.6 L3.6 14.6 C4.6 12.6 8 12 10 11.4 L15 11.4 C18 12 21.4 12.6 22.2 14.8 L23 20.6 Z" fill="#55524c"/><path d="M10.6 11.4 L14.8 11.4 L14.2 20.6 L11.2 20.6 Z" fill="#b4c2d0"/><ellipse cx="12.6" cy="5.6" rx="5.2" ry="5.3" fill="#2a1a14"/><ellipse cx="12.6" cy="7.4" rx="2.8" ry="3.7" fill="#dcb6a2"/><rect x="11.7" y="9.1" width="1.8" height="0.8" fill="#c03a40"/></g><g transform="translate(652.5 0)"><rect width="26.1" height="20.6" fill="#151c3c"/><rect x="0" y="0" width="7.4" height="20.6" fill="#a59c84"/><path d="M0 3 L6 8 L2 10 L7 15 L1 16 Z" fill="#5a6038"/><rect x="0" y="13" width="6" height="7.6" fill="#6e6038"/><rect x="16" y="9" width="10.1" height="11.6" fill="#6a5540"/><rect x="17" y="1" width="8" height="7" fill="#1d3470" opacity="0.7"/><rect x="20" y="11" width="5" height="6" fill="#b89468"/><path d="M2.6 20.6 L3.6 14.6 C4.6 12.6 8 12 10 11.4 L15 11.4 C18 12 21.4 12.6 22.2 14.8 L23 20.6 Z" fill="#55524c"/><path d="M10.6 11.4 L14.8 11.4 L14.2 20.6 L11.2 20.6 Z" fill="#b4c2d0"/><ellipse cx="12.6" cy="5.6" rx="5.2" ry="5.3" fill="#2a1a14"/><ellipse cx="12.6" cy="7.4" rx="2.8" ry="3.7" fill="#dcb6a2"/><rect x="11.7" y="9.1" width="1.8" height="0.8" fill="#c03a40"/></g><g transform="translate(678.6 0)"><rect width="26.1" height="20.6" fill="#151c3c"/><rect x="0" y="0" width="7.4" height="20.6" fill="#a59c84"/><path d="M0 3 L6 8 L2 10 L7 15 L1 16 Z" fill="#5a6038"/><rect x="0" y="13" width="6" height="7.6" fill="#6e6038"/><rect x="16" y="9" width="10.1" height="11.6" fill="#6a5540"/><rect x="17" y="1" width="8" height="7" fill="#1d3470" opacity="0.7"/><rect x="20" y="11" width="5" height="6" fill="#b89468"/><path d="M2.6 20.6 L3.6 14.6 C4.6 12.6 8 12 10 11.4 L15 11.4 C18 12 21.4 12.6 22.2 14.8 L23 20.6 Z" fill="#55524c"/><path d="M10.6 11.4 L14.8 11.4 L14.2 20.6 L11.2 20.6 Z" fill="#b4c2d0"/><ellipse cx="12.6" cy="5.6" rx="5.2" ry="5.3" fill="#2a1a14"/><ellipse cx="12.6" cy="7.4" rx="2.8" ry="3.7" fill="#dcb6a2"/><rect x="11.7" y="9.1" width="1.8" height="0.8" fill="#c03a40"/></g><g transform="translate(704.7 0)"><rect width="26.1" height="20.6" fill="#151c3c"/><rect x="0" y="0" width="7.4" height="20.6" fill="#a59c84"/><path d="M0 3 L6 8 L2 10 L7 15 L1 16 Z" fill="#5a6038"/><rect x="0" y="13" width="6" height="7.6" fill="#6e6038"/><rect x="16" y="9" width="10.1" height="11.6" fill="#6a5540"/><rect x="17" y="1" width="8" height="7" fill="#1d3470" opacity="0.7"/><rect x="20" y="11" width="5" height="6" fill="#b89468"/><path d="M2.6 20.6 L3.6 14.6 C4.6 12.6 8 12 10 11.4 L15 11.4 C18 12 21.4 12.6 22.2 14.8 L23 20.6 Z" fill="#55524c"/><path d="M10.6 11.4 L14.8 11.4 L14.2 20.6 L11.2 20.6 Z" fill="#b4c2d0"/><ellipse cx="12.6" cy="5.6" rx="5.2" ry="5.3" fill="#2a1a14"/><ellipse cx="12.6" cy="7.4" rx="2.8" ry="3.7" fill="#dcb6a2"/><rect x="11.7" y="9.1" width="1.8" height="0.8" fill="#c03a40"/></g><g transform="translate(730.8 0)"><rect width="26.1" height="20.6" fill="#151c3c"/><rect x="0" y="0" width="7.4" height="20.6" fill="#a59c84"/><path d="M0 3 L6 8 L2 10 L7 15 L1 16 Z" fill="#5a6038"/><rect x="0" y="13" width="6" height="7.6" fill="#6e6038"/><rect x="16" y="9" width="10.1" height="11.6" fill="#6a5540"/><rect x="17" y="1" width="8" height="7" fill="#1d3470" opacity="0.7"/><rect x="20" y="11" width="5" height="6" fill="#b89468"/><path d="M2.6 20.6 L3.6 14.6 C4.6 12.6 8 12 10 11.4 L15 11.4 C18 12 21.4 12.6 22.2 14.8 L23 20.6 Z" fill="#55524c"/><path d="M10.6 11.4 L14.8 11.4 L14.2 20.6 L11.2 20.6 Z" fill="#b4c2d0"/><ellipse cx="12.6" cy="5.6" rx="5.2" ry="5.3" fill="#2a1a14"/><ellipse cx="12.6" cy="7.4" rx="2.8" ry="3.7" fill="#dcb6a2"/><rect x="11.7" y="9.1" width="1.8" height="0.8" fill="#c03a40"/></g><g transform="translate(756.9 0)"><rect width="26.1" height="20.6" fill="#151c3c"/><rect x="0" y="0" width="7.4" height="20.6" fill="#a59c84"/><path d="M0 3 L6 8 L2 10 L7 15 L1 16 Z" fill="#5a6038"/><rect x="0" y="13" width="6" height="7.6" fill="#6e6038"/><rect x="16" y="9" width="10.1" height="11.6" fill="#6a5540"/><rect x="17" y="1" width="8" height="7" fill="#1d3470" opacity="0.7"/><rect x="20" y="11" width="5" height="6" fill="#b89468"/><path d="M2.6 20.6 L3.6 14.6 C4.6 12.6 8 12 10 11.4 L15 11.4 C18 12 21.4 12.6 22.2 14.8 L23 20.6 Z" fill="#55524c"/><path d="M10.6 11.4 L14.8 11.4 L14.2 20.6 L11.2 20.6 Z" fill="#b4c2d0"/><ellipse cx="12.6" cy="5.6" rx="5.2" ry="5.3" fill="#2a1a14"/><ellipse cx="12.6" cy="7.4" rx="2.8" ry="3.7" fill="#dcb6a2"/><rect x="11.7" y="9.1" width="1.8" height="0.8" fill="#c03a40"/></g><g transform="translate(783.0 0)"><rect width="26.1" height="20.6" fill="#151c3c"/><rect x="0" y="0" width="7.4" height="20.6" fill="#a59c84"/><path d="M0 3 L6 8 L2 10 L7 15 L1 16 Z" fill="#5a6038"/><rect x="0" y="13" width="6" height="7.6" fill="#6e6038"/><rect x="16" y="9" width="10.1" height="11.6" fill="#6a5540"/><rect x="17" y="1" width="8" height="7" fill="#1d3470" opacity="0.7"/><rect x="20" y="11" width="5" height="6" fill="#b89468"/><path d="M2.6 20.6 L3.6 14.6 C4.6 12.6 8 12 10 11.4 L15 11.4 C18 12 21.4 12.6 22.2 14.8 L23 20.6 Z" fill="#55524c"/><path d="M10.6 11.4 L14.8 11.4 L14.2 20.6 L11.2 20.6 Z" fill="#b4c2d0"/><ellipse cx="12.6" cy="5.6" rx="5.2" ry="5.3" fill="#2a1a14"/><ellipse cx="12.6" cy="7.4" rx="2.8" ry="3.7" fill="#dcb6a2"/><rect x="11.7" y="9.1" width="1.8" height="0.8" fill="#c03a40"/></g><g transform="translate(809.1 0)"><rect width="26.1" height="20.6" fill="#151c3c"/><rect x="0" y="0" width="7.4" height="20.6" fill="#a59c84"/><path d="M0 3 L6 8 L2 10 L7 15 L1 16 Z" fill="#5a6038"/><rect x="0" y="13" width="6" height="7.6" fill="#6e6038"/><rect x="16" y="9" width="10.1" height="11.6" fill="#6a5540"/><rect x="17" y="1" width="8" height="7" fill="#1d3470" opacity="0.7"/><rect x="20" y="11" width="5" height="6" fill="#b89468"/><path d="M2.6 20.6 L3.6 14.6 C4.6 12.6 8 12 10 11.4 L15 11.4 C18 12 21.4 12.6 22.2 14.8 L23 20.6 Z" fill="#55524c"/><path d="M10.6 11.4 L14.8 11.4 L14.2 20.6 L11.2 20.6 Z" fill="#b4c2d0"/><ellipse cx="12.6" cy="5.6" rx="5.2" ry="5.3" fill="#2a1a14"/><ellipse cx="12.6" cy="7.4" rx="2.8" ry="3.7" fill="#dcb6a2"/><rect x="11.7" y="9.1" width="1.8" height="0.8" fill="#c03a40"/></g><rect width="810.7" height="20.6" fill="#000" opacity="0.12"/></g></svg>
<div style="left:154.8px;top:557.8px;width:810.7px;height:26.9px;background:#0e3059;border-radius:1.6px;"></div>
<svg style="left:154.8px;top:557.8px;" width="810.7" height="26.9" viewBox="0 0 810.7 26.9"><defs><clipPath id="ac"><rect width="810.7" height="26.9" rx="1.6"/></clipPath></defs><g clip-path="url(#ac)"><path d="M0 26.9 L0.0 26.9 L1.1 26.9 L2.2 26.9 L3.3 26.9 L4.4 26.9 L5.5 26.9 L6.6 26.9 L7.7 26.9 L8.8 26.9 L9.9 26.9 L11.0 18.2 L12.1 17.3 L13.2 15.5 L14.3 17.2 L15.4 15.9 L16.5 15.8 L17.6 17.2 L18.7 15.8 L19.8 17.2 L20.9 16.1 L22.0 17.2 L23.1 17.8 L24.2 16.5 L25.3 13.4 L26.4 14.9 L27.5 15.5 L28.6 13.9 L29.7 11.1 L30.8 11.0 L31.9 12.0 L33.0 9.8 L34.1 13.1 L35.2 11.3 L36.3 13.1 L37.4 15.3 L38.5 17.0 L39.6 17.4 L40.7 15.1 L41.8 16.8 L42.9 16.1 L44.0 15.3 L45.1 16.2 L46.2 15.9 L47.3 18.3 L48.4 20.0 L49.5 20.5 L50.6 18.4 L51.7 18.2 L52.8 18.6 L53.9 17.5 L55.0 17.3 L56.1 17.9 L57.2 15.8 L58.3 14.7 L59.4 16.2 L60.5 15.5 L61.6 15.2 L62.7 13.2 L63.8 12.4 L64.9 14.1 L66.0 11.7 L67.1 14.5 L68.2 14.9 L69.3 13.5 L70.4 15.7 L71.5 15.5 L72.6 17.7 L73.7 16.2 L74.8 14.6 L75.9 14.5 L77.0 13.0 L78.1 14.9 L79.2 14.4 L80.3 14.6 L81.4 14.9 L82.5 15.9 L83.6 14.7 L84.7 13.4 L85.8 14.9 L86.9 15.1 L88.0 18.5 L89.1 17.6 L90.2 17.3 L91.3 15.3 L92.4 14.7 L93.5 17.1 L94.6 18.3 L95.7 17.6 L96.8 20.5 L97.9 20.2 L99.0 21.4 L100.1 21.4 L101.2 21.4 L102.3 20.5 L103.4 21.4 L104.5 21.4 L105.6 20.8 L106.7 17.6 L107.8 19.6 L108.9 20.7 L110.0 21.9 L111.1 23.1 L112.2 25.3 L113.3 26.9 L114.4 26.9 L115.5 26.9 L116.6 26.9 L117.7 26.9 L118.8 26.9 L119.9 26.9 L121.0 26.9 L122.1 26.9 L123.2 26.9 L124.3 26.9 L125.4 26.9 L126.5 26.9 L127.6 26.9 L128.7 26.9 L129.8 18.1 L130.9 14.9 L132.0 15.9 L133.1 16.9 L134.2 14.9 L135.3 13.1 L136.4 16.0 L137.5 17.9 L138.6 18.9 L139.7 19.6 L140.8 18.7 L141.9 17.5 L143.0 18.2 L144.1 20.0 L145.2 19.0 L146.3 18.4 L147.4 16.9 L148.5 13.7 L149.6 12.7 L150.7 12.8 L151.8 12.2 L152.9 11.5 L154.0 14.1 L155.1 11.5 L156.2 10.2 L157.3 8.7 L158.4 8.3 L159.5 9.7 L160.6 10.8 L161.7 13.2 L162.8 12.2 L163.9 14.4 L165.0 16.1 L166.1 16.6 L167.2 17.3 L168.3 16.9 L169.4 18.3 L170.5 19.5 L171.6 19.8 L172.7 20.3 L173.8 19.4 L174.9 20.5 L176.0 17.0 L177.1 15.9 L178.2 17.5 L179.3 18.2 L180.4 18.3 L181.5 18.2 L182.6 19.5 L183.7 16.6 L184.8 13.7 L185.9 14.4 L187.0 14.8 L188.1 17.0 L189.2 18.6 L190.3 18.4 L191.4 18.6 L192.5 15.7 L193.6 17.1 L194.7 18.8 L195.8 15.1 L196.9 14.6 L198.0 16.2 L199.1 15.3 L200.2 17.3 L201.3 16.1 L202.4 12.9 L203.5 11.3 L204.6 11.0 L205.7 13.0 L206.8 14.1 L207.9 15.9 L209.0 14.1 L210.1 14.2 L211.2 13.1 L212.3 14.7 L213.4 16.5 L214.5 14.8 L215.6 12.8 L216.7 12.2 L217.8 12.1 L218.9 12.0 L220.0 12.4 L221.1 15.5 L222.2 16.2 L223.3 17.7 L224.4 20.4 L225.5 21.4 L226.6 21.4 L227.7 21.4 L228.8 20.7 L229.9 17.8 L231.0 18.4 L232.1 16.1 L233.2 14.2 L234.3 12.9 L235.4 15.0 L236.5 17.2 L237.6 18.7 L238.7 19.8 L239.8 20.5 L240.9 18.8 L242.0 16.0 L243.1 14.3 L244.2 14.9 L245.3 14.3 L246.4 13.2 L247.5 16.0 L248.6 15.1 L249.7 13.1 L250.8 12.3 L251.9 12.0 L253.0 13.2 L254.1 15.6 L255.2 14.3 L256.3 15.7 L257.4 14.4 L258.5 12.6 L259.6 14.3 L260.7 15.6 L261.8 13.8 L262.9 13.6 L264.0 16.4 L265.1 18.7 L266.2 20.3 L267.3 17.5 L268.4 16.0 L269.5 18.3 L270.6 16.5 L271.7 14.3 L272.8 14.4 L273.9 15.9 L275.0 16.0 L276.1 18.1 L277.2 20.2 L278.3 16.6 L279.4 15.6 L280.5 15.4 L281.6 13.0 L282.7 13.8 L283.8 12.0 L284.9 10.9 L286.0 13.1 L287.1 14.5 L288.2 15.2 L289.3 15.9 L290.4 14.5 L291.5 15.2 L292.6 14.8 L293.7 16.1 L294.8 12.9 L295.9 13.5 L297.0 13.4 L298.1 12.7 L299.2 10.6 L300.3 11.7 L301.4 9.9 L302.5 10.8 L303.6 11.4 L304.7 12.0 L305.8 15.0 L306.9 15.1 L308.0 16.6 L309.1 18.6 L310.2 16.0 L311.3 17.4 L312.4 16.9 L313.5 15.3 L314.6 15.0 L315.7 16.0 L316.8 15.7 L317.9 15.2 L319.0 13.7 L320.1 16.1 L321.2 15.4 L322.3 18.4 L323.4 21.0 L324.5 22.3 L325.6 24.9 L326.7 26.9 L327.8 26.9 L328.9 26.9 L330.0 26.9 L331.1 26.9 L332.2 26.9 L333.3 26.9 L334.4 26.9 L335.5 26.9 L336.6 26.9 L337.7 26.9 L338.8 26.9 L339.9 22.1 L341.0 14.0 L342.1 10.0 L343.2 11.4 L344.3 11.6 L345.4 12.4 L346.5 13.0 L347.6 12.6 L348.7 13.7 L349.8 14.2 L350.9 14.9 L352.0 13.1 L353.1 13.1 L354.2 12.3 L355.3 11.5 L356.4 14.5 L357.5 15.2 L358.6 13.7 L359.7 13.2 L360.8 16.5 L361.9 19.0 L363.0 19.1 L364.1 21.1 L365.2 21.4 L366.3 21.4 L367.4 20.5 L368.5 18.2 L369.6 15.9 L370.7 18.1 L371.8 16.7 L372.9 15.9 L374.0 17.9 L375.1 15.5 L376.2 13.2 L377.3 15.5 L378.4 13.2 L379.5 14.5 L380.6 14.9 L381.7 12.6 L382.8 11.8 L383.9 14.7 L385.0 15.4 L386.1 15.5 L387.2 16.5 L388.3 18.1 L389.4 18.6 L390.5 16.9 L391.6 19.5 L392.7 18.6 L393.8 18.6 L394.9 20.9 L396.0 20.9 L397.1 19.5 L398.2 19.1 L399.3 21.2 L400.4 17.9 L401.5 16.6 L402.6 14.7 L403.7 17.9 L404.8 19.3 L405.9 21.4 L407.0 19.1 L408.1 20.0 L409.2 21.3 L410.3 20.7 L411.4 17.6 L412.5 15.7 L413.6 17.2 L414.7 18.7 L415.8 15.7 L416.9 15.3 L418.0 14.2 L419.1 16.5 L420.2 18.2 L421.3 16.1 L422.4 15.8 L423.5 17.5 L424.6 14.0 L425.7 13.1 L426.8 11.6 L427.9 14.2 L429.0 12.0 L430.1 14.6 L431.2 12.3 L432.3 12.8 L433.4 13.8 L434.5 13.5 L435.6 11.3 L436.7 13.3 L437.8 15.4 L438.9 15.0 L440.0 16.2 L441.1 17.8 L442.2 18.8 L443.3 20.1 L444.4 20.3 L445.5 19.8 L446.6 19.6 L447.7 17.1 L448.8 17.7 L449.9 17.0 L451.0 18.2 L452.1 18.1 L453.2 19.7 L454.3 19.6 L455.4 20.7 L456.5 17.7 L457.6 16.4 L458.7 17.3 L459.8 16.4 L460.9 13.3 L462.0 15.3 L463.1 12.9 L464.2 13.2 L465.3 13.0 L466.4 11.1 L467.5 11.9 L468.6 11.9 L469.7 11.0 L470.8 8.8 L471.9 10.6 L473.0 9.3 L474.1 9.1 L475.2 9.4 L476.3 10.8 L477.4 12.3 L478.5 14.9 L479.6 16.5 L480.7 18.1 L481.8 15.8 L482.9 16.8 L484.0 18.1 L485.1 19.5 L486.2 16.7 L487.3 14.6 L488.4 14.3 L489.5 16.1 L490.6 17.7 L491.7 18.6 L492.8 18.4 L493.9 19.9 L495.0 19.5 L496.1 20.2 L497.2 18.6 L498.3 19.3 L499.4 22.2 L500.5 25.1 L501.6 26.9 L502.7 26.9 L503.8 26.9 L504.9 26.9 L506.0 26.9 L507.1 26.9 L508.2 26.9 L509.3 26.9 L510.4 19.9 L511.5 15.0 L512.6 15.9 L513.7 18.3 L514.8 18.1 L515.9 17.5 L517.0 16.9 L518.1 18.1 L519.2 17.4 L520.3 19.6 L521.4 19.9 L522.5 21.0 L523.6 20.3 L524.7 21.4 L525.8 21.4 L526.9 21.4 L528.0 21.4 L529.1 20.8 L530.2 20.0 L531.3 18.3 L532.4 17.6 L533.5 16.8 L534.6 15.5 L535.7 17.1 L536.8 18.5 L537.9 16.2 L539.0 18.8 L540.1 17.7 L541.2 17.3 L542.3 20.0 L543.4 17.8 L544.5 15.9 L545.6 15.8 L546.7 15.1 L547.8 14.1 L548.9 16.7 L550.0 16.5 L551.1 16.4 L552.2 14.5 L553.3 13.2 L554.4 12.1 L555.5 12.4 L556.6 11.0 L557.7 11.1 L558.8 11.0 L559.9 13.3 L561.0 15.9 L562.1 17.3 L563.2 17.1 L564.3 18.3 L565.4 15.4 L566.5 14.8 L567.6 14.0 L568.7 13.5 L569.8 12.8 L570.9 13.5 L572.0 16.5 L573.1 14.6 L574.2 13.5 L575.3 14.0 L576.4 14.3 L577.5 13.9 L578.6 16.7 L579.7 15.2 L580.8 16.7 L581.9 18.7 L583.0 19.1 L584.1 17.0 L585.2 18.1 L586.3 16.1 L587.4 13.4 L588.5 13.9 L589.6 14.7 L590.7 14.8 L591.8 13.6 L592.9 12.3 L594.0 12.0 L595.1 11.6 L596.2 14.2 L597.3 15.6 L598.4 16.0 L599.5 13.7 L600.6 14.2 L601.7 13.2 L602.8 15.4 L603.9 16.6 L605.0 16.5 L606.1 14.3 L607.2 12.6 L608.3 11.5 L609.4 12.8 L610.5 12.6 L611.6 12.8 L612.7 13.0 L613.8 15.0 L614.9 12.6 L616.0 14.5 L617.1 11.9 L618.2 10.4 L619.3 14.1 L620.4 14.6 L621.5 13.2 L622.6 11.5 L623.7 13.0 L624.8 15.1 L625.9 16.9 L627.0 14.4 L628.1 16.5 L629.2 16.1 L630.3 18.1 L631.4 17.5 L632.5 14.8 L633.6 17.2 L634.7 15.2 L635.8 15.4 L636.9 13.5 L638.0 13.1 L639.1 15.1 L640.2 13.1 L641.3 13.8 L642.4 16.6 L643.5 18.7 L644.6 17.7 L645.7 17.1 L646.8 17.4 L647.9 18.5 L649.0 18.3 L650.1 18.3 L651.2 15.6 L652.3 18.0 L653.4 16.0 L654.5 14.1 L655.6 16.5 L656.7 14.2 L657.8 13.7 L658.9 12.4 L660.0 14.8 L661.1 16.2 L662.2 17.1 L663.3 14.8 L664.4 15.3 L665.5 16.9 L666.6 17.8 L667.7 19.3 L668.8 21.4 L669.9 21.4 L671.0 20.2 L672.1 21.1 L673.2 18.3 L674.3 19.8 L675.4 20.8 L676.5 20.2 L677.6 21.4 L678.7 21.3 L679.8 18.0 L680.9 16.0 L682.0 14.9 L683.1 14.9 L684.2 13.3 L685.3 12.0 L686.4 13.0 L687.5 12.7 L688.6 15.9 L689.7 14.6 L690.8 15.1 L691.9 13.8 L693.0 13.4 L694.1 15.0 L695.2 17.3 L696.3 14.4 L697.4 16.5 L698.5 16.2 L699.6 16.7 L700.7 17.3 L701.8 15.5 L702.9 13.0 L704.0 15.0 L705.1 14.4 L706.2 15.9 L707.3 15.7 L708.4 16.4 L709.5 18.1 L710.6 19.5 L711.7 20.9 L712.8 20.3 L713.9 22.4 L715.0 24.9 L716.1 26.9 L717.2 26.9 L718.3 26.9 L719.4 21.0 L720.5 13.2 L721.6 14.2 L722.7 16.5 L723.8 17.7 L724.9 19.1 L726.0 18.6 L727.1 19.5 L728.2 19.3 L729.3 19.0 L730.4 17.0 L731.5 13.9 L732.6 12.2 L733.7 12.7 L734.8 13.0 L735.9 12.6 L737.0 13.1 L738.1 13.6 L739.2 15.3 L740.3 15.5 L741.4 12.1 L742.5 14.0 L743.6 13.4 L744.7 12.4 L745.8 10.6 L746.9 12.6 L748.0 13.9 L749.1 15.1 L750.2 15.2 L751.3 15.1 L752.4 12.5 L753.5 11.2 L754.6 10.2 L755.7 14.0 L756.8 16.8 L757.9 15.3 L759.0 13.3 L760.1 14.1 L761.2 14.1 L762.3 17.1 L763.4 17.3 L764.5 14.6 L765.6 13.2 L766.7 12.0 L767.8 10.5 L768.9 13.1 L770.0 15.7 L771.1 17.3 L772.2 16.5 L773.3 15.0 L774.4 12.5 L775.5 11.8 L776.6 11.7 L777.7 10.9 L778.8 12.0 L779.9 12.2 L781.0 15.0 L782.1 13.2 L783.2 14.8 L784.3 12.4 L785.4 12.1 L786.5 13.7 L787.6 15.9 L788.7 16.9 L789.8 15.7 L790.9 14.6 L792.0 16.9 L793.1 18.9 L794.2 18.1 L795.3 17.3 L796.4 17.8 L797.5 19.2 L798.6 18.3 L799.7 20.8 L800.8 21.1 L801.9 20.6 L803.0 17.7 L804.1 17.3 L805.2 15.8 L806.3 16.8 L807.4 18.8 L808.5 20.2 L809.6 17.4 L810.7 26.9 Z" fill="#1186bc"/><rect x="32.5" y="9.8" width="1.2" height="1.6" fill="#f0883a"/><rect x="155.7" y="10.2" width="1.2" height="1.6" fill="#f0883a"/><rect x="156.8" y="8.7" width="1.2" height="1.6" fill="#f0883a"/><rect x="157.9" y="8.3" width="1.2" height="1.6" fill="#f0883a"/><rect x="159.0" y="9.7" width="1.2" height="1.6" fill="#f0883a"/><rect x="300.9" y="9.9" width="1.2" height="1.6" fill="#f0883a"/><rect x="341.6" y="10.0" width="1.2" height="1.6" fill="#f0883a"/><rect x="470.3" y="8.8" width="1.2" height="1.6" fill="#f0883a"/><rect x="472.5" y="9.3" width="1.2" height="1.6" fill="#f0883a"/><rect x="473.6" y="9.1" width="1.2" height="1.6" fill="#f0883a"/><rect x="474.7" y="9.4" width="1.2" height="1.6" fill="#f0883a"/><rect x="754.1" y="10.2" width="1.2" height="1.6" fill="#f0883a"/><path d="M0 17.7 L810.7 17.7" stroke="#6fb4dc" stroke-width="0.35" opacity="0.8"/></g></svg>
<div style="left:155.6px;top:559.4px;width:27.8px;height:6.8px;background:#25477a;border-radius:1px;opacity:0.9;"></div>
<div style="top:559.2px;height:7.2px;line-height:7.2px;font-size:5.3px;color:#eef4ff;white-space:nowrap;left:156.6px;">复合片段1</div>
<div style="left:170px;top:587px;width:18.3px;height:26.4px;background:#30466f;border-radius:1.6px;overflow:hidden;"></div>
<svg style="left:170px;top:587px;" width="18.3" height="26.4" viewBox="0 0 18.3 26.4"><path d="M0 26.4 L0.0 26.4 L0.8 17.3 L1.7 19.8 L2.5 21.5 L3.3 21.8 L4.2 22.4 L5.0 23.4 L5.8 24.1 L6.7 24.3 L7.5 24.5 L8.3 25.1 L9.2 25.4 L10.0 25.5 L10.8 25.7 L11.6 25.8 L12.5 26.0 L13.3 26.0 L14.1 26.1 L15.0 26.1 L15.8 26.2 L16.6 26.2 L17.5 26.3 L18.3 26.3 L18.3 26.4 Z" fill="#4a7fd8"/><path d="M0 23.0 L18.3 23.0" stroke="#8fb0e8" stroke-width="0.3" opacity="0.7"/></svg>
<div style="left:171px;top:588.4px;width:16.7px;height:6.6px;background:#4a628c;border-radius:0.8px;opacity:0.9;"></div>
<div style="left:171.8px;top:588.2px;width:15.9px;height:7px;line-height:7px;font-size:5.2px;color:#e6ecf8;white-space:nowrap;overflow:hidden;">放烟开</div>
<div style="left:295.5px;top:587px;width:49px;height:26.4px;background:#30466f;border-radius:1.6px;overflow:hidden;"></div>
<svg style="left:295.5px;top:587px;" width="49" height="26.4" viewBox="0 0 49 26.4"><path d="M0 26.4 L0.0 26.4 L0.8 22.5 L1.6 18.5 L2.4 21.5 L3.2 22.5 L4.0 22.8 L4.8 23.9 L5.6 24.0 L6.4 24.7 L7.2 25.2 L8.0 25.4 L8.8 25.6 L9.6 25.7 L10.4 25.8 L11.2 26.0 L12.0 26.1 L12.9 26.2 L13.7 26.2 L14.5 26.2 L15.3 26.3 L16.1 26.3 L16.9 26.3 L17.7 26.3 L18.5 26.3 L19.3 26.4 L20.1 26.4 L20.9 26.4 L21.7 26.4 L22.5 26.4 L23.3 26.4 L24.1 26.4 L24.9 26.4 L25.7 26.4 L26.5 26.4 L27.3 26.4 L28.1 26.4 L28.9 26.4 L29.7 26.4 L30.5 26.4 L31.3 26.4 L32.1 26.4 L32.9 26.4 L33.7 26.4 L34.5 26.4 L35.3 26.4 L36.1 26.4 L37.0 26.4 L37.8 26.4 L38.6 26.4 L39.4 26.4 L40.2 26.4 L41.0 26.4 L41.8 26.4 L42.6 26.4 L43.4 26.4 L44.2 26.4 L45.0 26.4 L45.8 26.4 L46.6 26.4 L47.4 26.4 L48.2 26.4 L49.0 26.4 L49.0 26.4 Z" fill="#4a7fd8"/><path d="M0 23.0 L49.0 23.0" stroke="#8fb0e8" stroke-width="0.3" opacity="0.7"/></svg>
<div style="left:296.5px;top:588.4px;width:22.3px;height:6.6px;background:#4a628c;border-radius:0.8px;opacity:0.9;"></div>
<div style="left:297.3px;top:588.2px;width:46.6px;height:7px;line-height:7px;font-size:5.2px;color:#e6ecf8;white-space:nowrap;overflow:hidden;">Swish_2</div>
<div style="left:384.2px;top:587px;width:25.1px;height:26.4px;background:#30466f;border-radius:1.6px;overflow:hidden;"></div>
<svg style="left:384.2px;top:587px;" width="25.1" height="26.4" viewBox="0 0 25.1 26.4"><path d="M0 26.4 L0.0 26.4 L0.8 18.7 L1.6 17.6 L2.4 20.1 L3.2 20.1 L4.0 20.7 L4.9 22.2 L5.7 22.8 L6.5 22.7 L7.3 23.5 L8.1 24.1 L8.9 24.1 L9.7 24.7 L10.5 24.9 L11.3 25.2 L12.1 25.1 L13.0 25.2 L13.8 25.5 L14.6 25.5 L15.4 25.8 L16.2 25.9 L17.0 25.9 L17.8 25.9 L18.6 26.0 L19.4 26.1 L20.2 26.1 L21.1 26.2 L21.9 26.2 L22.7 26.2 L23.5 26.3 L24.3 26.3 L25.1 26.3 L25.1 26.4 Z" fill="#4a7fd8"/><path d="M0 23.0 L25.1 23.0" stroke="#8fb0e8" stroke-width="0.3" opacity="0.7"/></svg>
<div style="left:385.2px;top:588.4px;width:15.9px;height:6.6px;background:#4a628c;border-radius:0.8px;opacity:0.9;"></div>
<div style="left:386px;top:588.2px;width:22.7px;height:7px;line-height:7px;font-size:5.2px;color:#e6ecf8;white-space:nowrap;overflow:hidden;">叮_13</div>
<div style="left:410.7px;top:587px;width:11.1px;height:26.4px;background:#30466f;border-radius:1.6px;overflow:hidden;"></div>
<svg style="left:410.7px;top:587px;" width="11.1" height="26.4" viewBox="0 0 11.1 26.4"><path d="M0 26.4 L0.0 26.4 L0.9 18.3 L1.7 20.7 L2.6 22.6 L3.4 23.9 L4.3 24.6 L5.1 25.1 L6.0 25.4 L6.8 25.8 L7.7 26.0 L8.5 26.0 L9.4 26.2 L10.2 26.3 L11.1 26.3 L11.1 26.4 Z" fill="#4a7fd8"/><path d="M0 23.0 L11.1 23.0" stroke="#8fb0e8" stroke-width="0.3" opacity="0.7"/></svg>
<div style="left:411.7px;top:588.4px;width:9.5px;height:6.6px;background:#4a628c;border-radius:0.8px;opacity:0.9;"></div>
<div style="left:412.5px;top:588.2px;width:8.7px;height:7px;line-height:7px;font-size:5.2px;color:#e6ecf8;white-space:nowrap;overflow:hidden;">砰,</div>
<div style="left:509.3px;top:587px;width:28.7px;height:26.4px;background:#30466f;border-radius:1.6px;overflow:hidden;"></div>
<svg style="left:509.3px;top:587px;" width="28.7" height="26.4" viewBox="0 0 28.7 26.4"><path d="M0 26.4 L0.0 19.0 L0.8 19.8 L1.6 17.5 L2.5 17.8 L3.3 17.4 L4.1 20.0 L4.9 20.7 L5.7 20.7 L6.6 19.2 L7.4 18.4 L8.2 19.4 L9.0 20.2 L9.8 19.5 L10.7 18.8 L11.5 18.6 L12.3 18.3 L13.1 18.0 L13.9 18.6 L14.8 20.6 L15.6 18.0 L16.4 19.9 L17.2 19.0 L18.0 19.7 L18.9 18.3 L19.7 20.3 L20.5 20.1 L21.3 20.1 L22.1 20.4 L23.0 17.8 L23.8 18.9 L24.6 19.8 L25.4 19.6 L26.2 17.4 L27.1 19.2 L27.9 20.2 L28.7 18.1 L28.7 26.4 Z" fill="#4a7fd8"/><path d="M0 23.0 L28.7 23.0" stroke="#8fb0e8" stroke-width="0.3" opacity="0.7"/></svg>
<div style="left:510.3px;top:588.4px;width:27.1px;height:6.6px;background:#4a628c;border-radius:0.8px;opacity:0.9;"></div>
<div style="left:511.1px;top:588.2px;width:26.3px;height:7px;line-height:7px;font-size:5.2px;color:#e6ecf8;white-space:nowrap;overflow:hidden;">放烟花现爆</div>
<div style="left:552.4px;top:587px;width:20px;height:26.4px;background:#30466f;border-radius:1.6px;overflow:hidden;"></div>
<svg style="left:552.4px;top:587px;" width="20" height="26.4" viewBox="0 0 20 26.4"><path d="M0 26.4 L0.0 26.4 L0.8 16.8 L1.6 18.8 L2.4 19.4 L3.2 21.9 L4.0 22.2 L4.8 22.5 L5.6 23.1 L6.4 23.6 L7.2 24.6 L8.0 24.8 L8.8 25.1 L9.6 25.3 L10.4 25.3 L11.2 25.5 L12.0 25.6 L12.8 25.8 L13.6 25.9 L14.4 26.0 L15.2 26.1 L16.0 26.1 L16.8 26.1 L17.6 26.2 L18.4 26.2 L19.2 26.3 L20.0 26.3 L20.0 26.4 Z" fill="#4a7fd8"/><path d="M0 23.0 L20.0 23.0" stroke="#8fb0e8" stroke-width="0.3" opacity="0.7"/></svg>
<div style="left:553.4px;top:588.4px;width:18.4px;height:6.6px;background:#4a628c;border-radius:0.8px;opacity:0.9;"></div>
<div style="left:554.2px;top:588.2px;width:17.6px;height:7px;line-height:7px;font-size:5.2px;color:#e6ecf8;white-space:nowrap;overflow:hidden;">旅合科技</div>
<div style="left:585.7px;top:587px;width:17.6px;height:26.4px;background:#30466f;border-radius:1.6px;overflow:hidden;"></div>
<svg style="left:585.7px;top:587px;" width="17.6" height="26.4" viewBox="0 0 17.6 26.4"><path d="M0 26.4 L0.0 26.4 L0.8 18.2 L1.7 20.3 L2.5 21.3 L3.4 22.3 L4.2 22.7 L5.0 23.4 L5.9 24.3 L6.7 24.8 L7.5 24.9 L8.4 25.1 L9.2 25.5 L10.1 25.6 L10.9 25.8 L11.7 25.8 L12.6 26.0 L13.4 26.1 L14.2 26.2 L15.1 26.2 L15.9 26.2 L16.8 26.2 L17.6 26.3 L17.6 26.4 Z" fill="#4a7fd8"/><path d="M0 23.0 L17.6 23.0" stroke="#8fb0e8" stroke-width="0.3" opacity="0.7"/></svg>
<div style="left:586.7px;top:588.4px;width:13px;height:6.6px;background:#4a628c;border-radius:0.8px;opacity:0.9;"></div>
<div style="left:587.5px;top:588.2px;width:15.2px;height:7px;line-height:7px;font-size:5.2px;color:#e6ecf8;white-space:nowrap;overflow:hidden;">嘀_2</div>
<div style="left:620px;top:587px;width:30.8px;height:26.4px;background:#30466f;border-radius:1.6px;overflow:hidden;"></div>
<svg style="left:620px;top:587px;" width="30.8" height="26.4" viewBox="0 0 30.8 26.4"><path d="M0 26.4 L0.0 20.4 L0.8 18.5 L1.6 19.5 L2.4 20.0 L3.2 19.9 L4.1 17.6 L4.9 19.9 L5.7 19.0 L6.5 19.7 L7.3 19.5 L8.1 17.9 L8.9 17.4 L9.7 19.7 L10.5 20.3 L11.3 18.4 L12.2 20.3 L13.0 21.0 L13.8 17.8 L14.6 19.5 L15.4 18.0 L16.2 19.5 L17.0 17.8 L17.8 19.3 L18.6 20.4 L19.5 20.9 L20.3 19.0 L21.1 18.7 L21.9 17.7 L22.7 20.7 L23.5 18.8 L24.3 19.7 L25.1 19.2 L25.9 20.5 L26.7 20.0 L27.6 19.1 L28.4 17.7 L29.2 20.6 L30.0 19.2 L30.8 18.1 L30.8 26.4 Z" fill="#4a7fd8"/><path d="M0 23.0 L30.8 23.0" stroke="#8fb0e8" stroke-width="0.3" opacity="0.7"/></svg>
<div style="left:621px;top:588.4px;width:13px;height:6.6px;background:#4a628c;border-radius:0.8px;opacity:0.9;"></div>
<div style="left:621.8px;top:588.2px;width:28.4px;height:7px;line-height:7px;font-size:5.2px;color:#e6ecf8;white-space:nowrap;overflow:hidden;">咻_4</div>
<div style="left:815.5px;top:587px;width:29.3px;height:26.4px;background:#30466f;border-radius:1.6px;overflow:hidden;"></div>
<svg style="left:815.5px;top:587px;" width="29.3" height="26.4" viewBox="0 0 29.3 26.4"><path d="M0 26.4 L0.0 26.4 L0.8 26.2 L1.6 25.9 L2.4 25.2 L3.3 24.6 L4.1 24.3 L4.9 24.1 L5.7 22.6 L6.5 22.6 L7.3 21.2 L8.1 21.1 L9.0 20.1 L9.8 21.0 L10.6 19.1 L11.4 20.1 L12.2 19.4 L13.0 18.0 L13.8 17.9 L14.6 19.6 L15.5 19.6 L16.3 19.2 L17.1 19.1 L17.9 19.7 L18.7 20.7 L19.5 20.8 L20.3 20.3 L21.2 20.6 L22.0 22.6 L22.8 22.4 L23.6 22.8 L24.4 24.1 L25.2 24.0 L26.0 25.1 L26.9 25.4 L27.7 25.8 L28.5 26.2 L29.3 26.4 L29.3 26.4 Z" fill="#4a7fd8"/><path d="M0 23.0 L29.3 23.0" stroke="#8fb0e8" stroke-width="0.3" opacity="0.7"/></svg>
<div style="left:816.5px;top:588.4px;width:18.2px;height:6.6px;background:#4a628c;border-radius:0.8px;opacity:0.9;"></div>
<div style="left:817.3px;top:588.2px;width:26.9px;height:7px;line-height:7px;font-size:5.2px;color:#e6ecf8;white-space:nowrap;overflow:hidden;">抽纸_1</div>
<div style="left:337px;top:615.8px;width:48px;height:19.4px;background:#30466f;border-radius:1.6px;overflow:hidden;"></div>
<svg style="left:337px;top:615.8px;" width="48" height="19.4" viewBox="0 0 48 19.4"><path d="M0 19.4 L0.0 19.4 L0.8 15.4 L1.6 11.4 L2.4 14.3 L3.2 15.2 L4.0 16.2 L4.8 16.7 L5.6 17.4 L6.4 17.8 L7.2 18.3 L8.0 18.3 L8.8 18.6 L9.6 18.8 L10.4 18.9 L11.2 19.0 L12.0 19.1 L12.8 19.2 L13.6 19.2 L14.4 19.3 L15.2 19.3 L16.0 19.3 L16.8 19.3 L17.6 19.3 L18.4 19.4 L19.2 19.4 L20.0 19.4 L20.8 19.4 L21.6 19.4 L22.4 19.4 L23.2 19.4 L24.0 19.4 L24.8 19.4 L25.6 19.4 L26.4 19.4 L27.2 19.4 L28.0 19.4 L28.8 19.4 L29.6 19.4 L30.4 19.4 L31.2 19.4 L32.0 19.4 L32.8 19.4 L33.6 19.4 L34.4 19.4 L35.2 19.4 L36.0 19.4 L36.8 19.4 L37.6 19.4 L38.4 19.4 L39.2 19.4 L40.0 19.4 L40.8 19.4 L41.6 19.4 L42.4 19.4 L43.2 19.4 L44.0 19.4 L44.8 19.4 L45.6 19.4 L46.4 19.4 L47.2 19.4 L48.0 19.4 L48.0 19.4 Z" fill="#4a7fd8"/><path d="M0 16.0 L48.0 16.0" stroke="#8fb0e8" stroke-width="0.3" opacity="0.7"/></svg>
<div style="left:338px;top:617.2px;width:22.3px;height:6.6px;background:#4a628c;border-radius:0.8px;opacity:0.9;"></div>
<div style="left:338.8px;top:617px;width:45.6px;height:7px;line-height:7px;font-size:5.2px;color:#e6ecf8;white-space:nowrap;overflow:hidden;">Swish_2</div>
<div style="left:128.8px;top:635px;width:930.2px;height:3px;background:#2e2e2e;"></div>
<div style="left:128.8px;top:635px;width:771.2px;height:3px;background:#4a4a4a;border-radius:1.5px;"></div>
<div style="left:422.1px;top:430px;width:0.8px;height:202px;background:#e8e8e8;"></div>
<svg style="left:419.4px;top:422.4px;" width="6.2" height="8" viewBox="0 0 6.2 8"><path d="M0.6 0.6 L5.6 0.6 L5.6 5.4 L3.1 7.4 L0.6 5.4 Z" fill="#1c1c1c" stroke="#f4f4f4" stroke-width="0.9" stroke-linejoin="round"/></svg>
</body></html>
